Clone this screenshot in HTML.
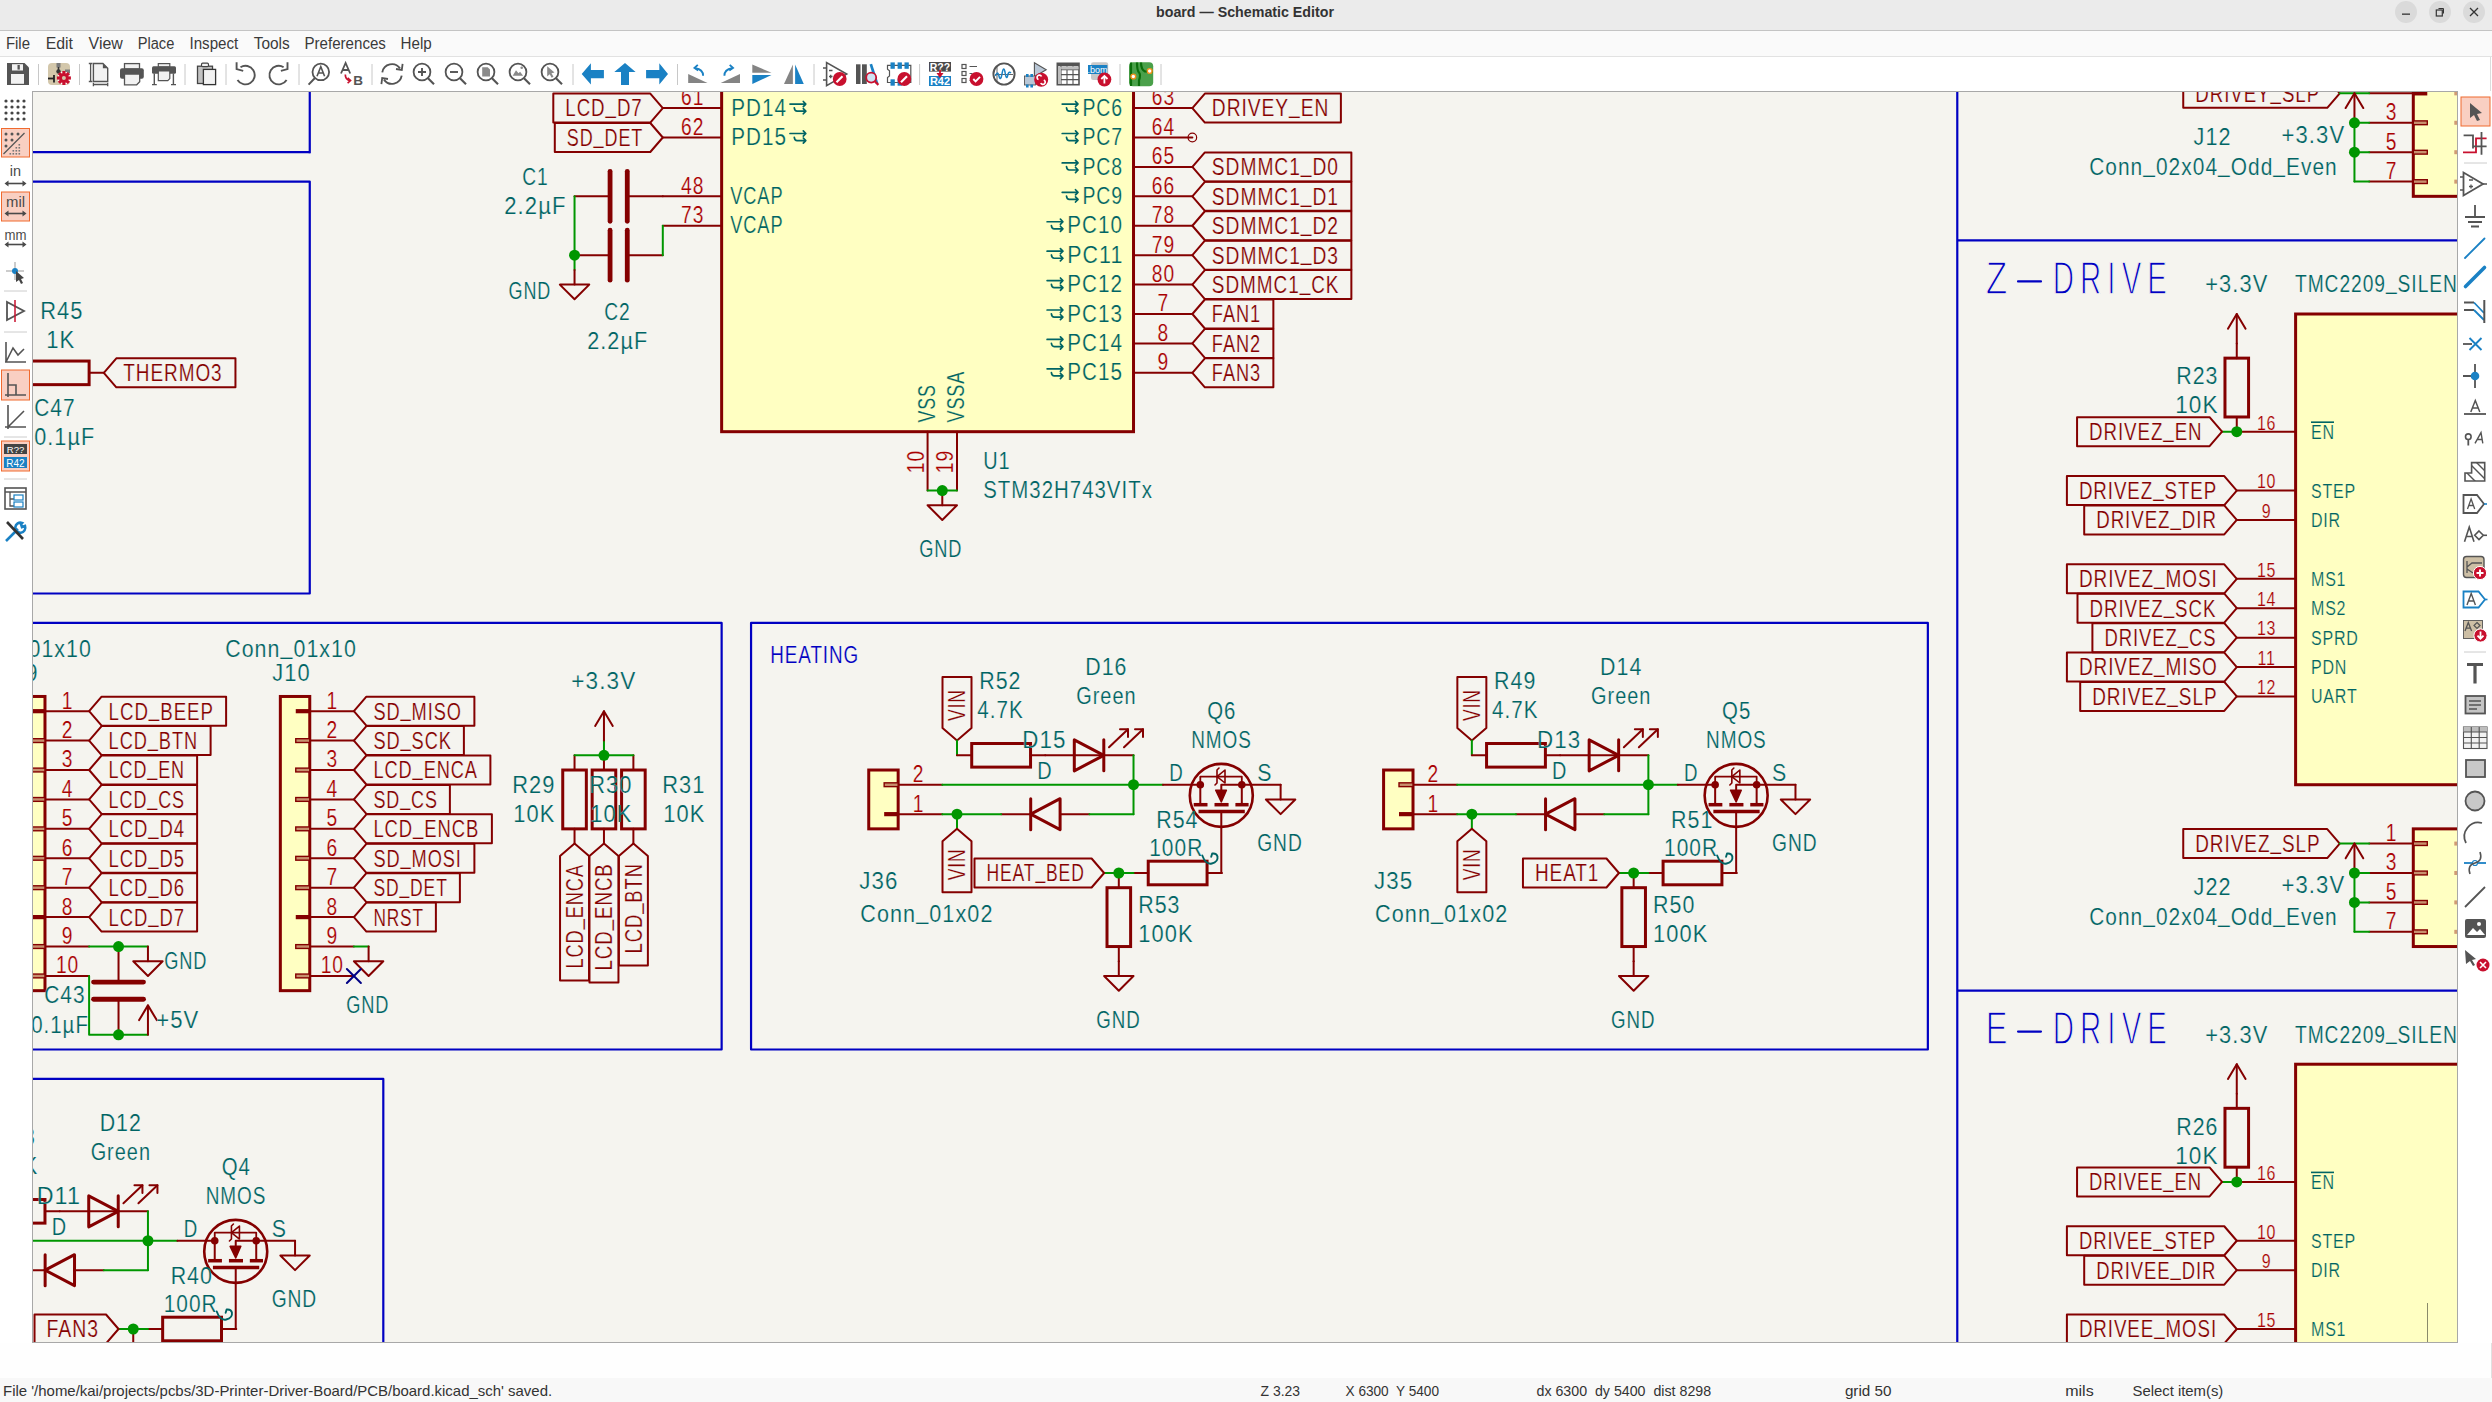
<!DOCTYPE html>
<html><head><meta charset="utf-8"><title>board — Schematic Editor</title>
<style>
html,body{margin:0;padding:0;width:2492px;height:1402px;overflow:hidden;background:#ffffff;}
svg{display:block;font-family:"Liberation Sans",sans-serif;}
</style></head><body>
<svg width="2492" height="1402" viewBox="0 0 2492 1402">
<defs><clipPath id="cv"><rect x="33" y="92" width="2424" height="1250"/></clipPath></defs>
<rect x="0" y="0" width="2492" height="30" fill="#ebebeb"/>
<rect x="0" y="30" width="2492" height="1" fill="#c4c4c4"/>
<text x="1156" y="16.8" font-size="15.5" font-weight="bold" fill="#333" textLength="178" lengthAdjust="spacingAndGlyphs">board — Schematic Editor</text>
<circle cx="2406" cy="12" r="11" fill="#dadada"/><rect x="2402" y="13.5" width="8" height="1.3" fill="#333"/>
<circle cx="2440" cy="12" r="11" fill="#dadada"/><rect x="2436.3" y="10" width="6" height="6" fill="none" stroke="#333" stroke-width="1.2"/><path d="M2438.5,8.5 h5 v5" fill="none" stroke="#333" stroke-width="1"/>
<circle cx="2474" cy="12" r="11" fill="#dadada"/><path d="M2470,8 l8,8 M2478,8 l-8,8" stroke="#333" stroke-width="1.3"/>
<rect x="0" y="31" width="2492" height="25" fill="#fafafa"/>
<rect x="0" y="56" width="2492" height="1" fill="#e2e2e2"/>
<g font-size="16" fill="#3a3a3a">
<text x="5.9" y="49.3" textLength="24.1" lengthAdjust="spacingAndGlyphs">File</text><text x="45.7" y="49.3" textLength="27.299999999999997" lengthAdjust="spacingAndGlyphs">Edit</text><text x="88.6" y="49.3" textLength="34.2" lengthAdjust="spacingAndGlyphs">View</text><text x="137.7" y="49.3" textLength="36.60000000000002" lengthAdjust="spacingAndGlyphs">Place</text><text x="189.5" y="49.3" textLength="48.80000000000001" lengthAdjust="spacingAndGlyphs">Inspect</text><text x="253.7" y="49.3" textLength="36.0" lengthAdjust="spacingAndGlyphs">Tools</text><text x="304.5" y="49.3" textLength="81.39999999999998" lengthAdjust="spacingAndGlyphs">Preferences</text><text x="400.6" y="49.3" textLength="31.19999999999999" lengthAdjust="spacingAndGlyphs">Help</text>
</g>
<path d="M7,63 h17.5 l4.5,4.5 v17.5 h-22 z" fill="#545454"/><rect x="12" y="64.2" width="11" height="6.3" fill="#f2f2f2"/><rect x="17.5" y="65" width="2.3" height="4.6" fill="#545454"/><rect x="11" y="74" width="13" height="9.8" fill="#f2f2f2"/><line x1="38.5" y1="64" x2="38.5" y2="85" stroke="#c8c8c8" stroke-width="1"/><rect x="48" y="63" width="22" height="22" rx="4" fill="#d3c7ab"/><rect x="56.5" y="63" width="4" height="4.5" fill="#7a7a7a"/><path d="M58.5,67 v6" stroke="#333" stroke-width="1.6"/><circle cx="58.5" cy="71.5" r="2.2" fill="#333"/><rect x="65" y="69.5" width="5" height="3.5" fill="#7a7a7a"/><path d="M48,78.5 h6" stroke="#222" stroke-width="1.8"/><path d="M54,75 v7.5" stroke="#222" stroke-width="1.8"/><circle cx="63.9" cy="78" r="6.6" fill="#fff"/><rect x="-1.6" y="-7" width="3.2" height="3" transform="translate(63.9,78) rotate(0)" fill="#c8102e"/><rect x="-1.6" y="-7" width="3.2" height="3" transform="translate(63.9,78) rotate(45)" fill="#c8102e"/><rect x="-1.6" y="-7" width="3.2" height="3" transform="translate(63.9,78) rotate(90)" fill="#c8102e"/><rect x="-1.6" y="-7" width="3.2" height="3" transform="translate(63.9,78) rotate(135)" fill="#c8102e"/><rect x="-1.6" y="-7" width="3.2" height="3" transform="translate(63.9,78) rotate(180)" fill="#c8102e"/><rect x="-1.6" y="-7" width="3.2" height="3" transform="translate(63.9,78) rotate(225)" fill="#c8102e"/><rect x="-1.6" y="-7" width="3.2" height="3" transform="translate(63.9,78) rotate(270)" fill="#c8102e"/><rect x="-1.6" y="-7" width="3.2" height="3" transform="translate(63.9,78) rotate(315)" fill="#c8102e"/><circle cx="63.9" cy="78" r="4.8" fill="#c8102e"/><circle cx="63.9" cy="78" r="2" fill="#d3c7ab"/><line x1="79.5" y1="64" x2="79.5" y2="85" stroke="#c8c8c8" stroke-width="1"/><path d="M93.4,63.5 h9.5 l4.8,4.8 v13.2 h-14.3 z" fill="#f2f2f2" stroke="#545454" stroke-width="1.4"/><path d="M102.9,63.5 l4.8,4.8 h-4.8 z" fill="#545454"/><path d="M90.6,63.5 v18 M88.8,63.5 h3.6 M88.8,81.5 h3.6 M93.4,84.5 h14.3 M93.4,82.8 v3.4 M107.7,82.8 v3.4" stroke="#545454" stroke-width="1.3" fill="none"/><rect x="124.5" y="63.6" width="15" height="5.5" fill="#f2f2f2" stroke="#545454" stroke-width="1.3"/><rect x="120" y="68.2" width="23.8" height="10.5" rx="2" fill="#545454"/><path d="M124.5,74 h15.2 v7.8 l-3,3 h-12.2 z" fill="#f2f2f2" stroke="#545454" stroke-width="1.3"/><rect x="158.3" y="63.6" width="11.5" height="3.5" fill="#f2f2f2" stroke="#545454" stroke-width="1.2"/><rect x="152" y="66.2" width="24" height="7.6" rx="1.5" fill="#545454"/><path d="M158.3,71 h11.5 v7.6 l-2,2 h-9.5 z" fill="#f2f2f2" stroke="#545454" stroke-width="1.2"/><path d="M154.3,73.5 v11 M173.4,73.5 v11 M152,84.6 h4.8 M171,84.6 h5" stroke="#545454" stroke-width="1.4"/><line x1="185" y1="64" x2="185" y2="85" stroke="#c8c8c8" stroke-width="1"/><rect x="197.5" y="66.2" width="15" height="17.3" fill="#c2c2c2" stroke="#444" stroke-width="1.3"/><rect x="201.5" y="63.2" width="7" height="3.5" rx="1.2" fill="#f2f2f2" stroke="#444" stroke-width="1.2"/><rect x="203.4" y="69.4" width="12.2" height="15.2" fill="#f2f2f2" stroke="#333" stroke-width="1.3"/><line x1="226" y1="64" x2="226" y2="85" stroke="#c8c8c8" stroke-width="1"/><path d="M240.5,67.2 A9.3,9.3 0 1 1 237.5,80" fill="none" stroke="#545454" stroke-width="1.9"/><path d="M236.6,62.3 v6.8 l6.6,1.8" fill="none" stroke="#545454" stroke-width="1.9"/><path d="M283.6,67.2 A9.3,9.3 0 1 0 286.6,80" fill="none" stroke="#545454" stroke-width="1.9"/><path d="M287.5,62.3 v6.8 l-6.6,1.8" fill="none" stroke="#545454" stroke-width="1.9"/><line x1="299" y1="64" x2="299" y2="85" stroke="#c8c8c8" stroke-width="1"/><circle cx="320.8" cy="71.9" r="8.3" fill="none" stroke="#545454" stroke-width="1.8"/><path d="M315.2,77.8 l-6.6,6.8" stroke="#545454" stroke-width="2"/><path d="M317,76.2 l3.8,-9.5 l3.8,9.5 M318.4,73 h4.8" stroke="#545454" stroke-width="1.6" fill="none"/><path d="M341,73.5 l4.6,-10.5 l4.6,10.5 M342.6,70 h6" stroke="#545454" stroke-width="1.8" fill="none"/><text x="358" y="84.6" font-size="13.5" font-weight="bold" text-anchor="middle" fill="#545454">B</text><path d="M345.3,74.5 q0,5 4.5,6.2" stroke="#c8102e" stroke-width="1.7" fill="none"/><path d="M347.6,77.8 l3,2.8 l-3,2.6" stroke="#c8102e" stroke-width="1.6" fill="none"/><line x1="372" y1="64" x2="372" y2="85" stroke="#c8c8c8" stroke-width="1"/><path d="M382.3,72.3 A9.8,9.8 0 0 1 400.0,68.4 M401.7,75.7 A9.8,9.8 0 0 1 384.0,79.6" fill="none" stroke="#545454" stroke-width="1.9"/><path d="M402.6,63.8 l-0.8,6.2 l-5.8,-1 M381.4,84.2 l0.8,-6.2 l5.8,1" fill="none" stroke="#545454" stroke-width="1.8"/><circle cx="422" cy="72" r="8.4" fill="none" stroke="#545454" stroke-width="1.8"/><path d="M428,78.2 l6,6" stroke="#545454" stroke-width="2.1"/><path d="M418,72 h8 M422,68 v8" stroke="#545454" stroke-width="1.9"/><circle cx="454" cy="72" r="8.4" fill="none" stroke="#545454" stroke-width="1.8"/><path d="M460,78.2 l6,6" stroke="#545454" stroke-width="2.1"/><path d="M450,72 h8" stroke="#545454" stroke-width="1.9"/><circle cx="486" cy="72" r="8.4" fill="none" stroke="#545454" stroke-width="1.8"/><path d="M492,78.2 l6,6" stroke="#545454" stroke-width="2.1"/><path d="M482.2,67.3 h5.5 l2.3,2.3 v7 h-7.8 z" fill="#8a8a8a"/><circle cx="518" cy="72" r="8.4" fill="none" stroke="#545454" stroke-width="1.8"/><path d="M524,78.2 l6,6" stroke="#545454" stroke-width="2.1"/><path d="M512.7,75.8 l3.3,-5.5 l2.5,3 l1.6,-1.6 l3,4.1 z" fill="#8a8a8a"/><circle cx="521.7" cy="67.8" r="1.3" fill="#8a8a8a"/><circle cx="550" cy="72" r="8.4" fill="none" stroke="#545454" stroke-width="1.8"/><path d="M556,78.2 l6,6" stroke="#545454" stroke-width="2.1"/><path d="M547.2,66.3 l7.3,6.3 l-3,0.6 l2,3.6 l-1.8,1 l-2,-3.6 l-2.5,2.2 z" fill="#8a8a8a"/><line x1="573" y1="64" x2="573" y2="85" stroke="#c8c8c8" stroke-width="1"/><path d="M581.7,73.9 l9.2,-10.6 v6.7 h13 v8.2 h-13 v6.3 z" fill="#1a81c4"/><path d="M625,63 l10.6,8.9 h-6.6 v13.1 h-8 v-13.1 h-6.7 z" fill="#1a81c4"/><path d="M668,73.9 l-8.7,-10.6 v6.7 h-13.2 v8.2 h13.2 v6.3 z" fill="#1a81c4"/><line x1="677.5" y1="64" x2="677.5" y2="85" stroke="#c8c8c8" stroke-width="1"/><path d="M688.2,73.9 v9 h19.3 z" fill="#848484"/><path d="M703.1,75.8 q0,-6.5 -7.6,-7.6" fill="none" stroke="#1a81c4" stroke-width="1.9"/><path d="M697.8,64.8 l-3.4,3.2 l3.8,2.6" fill="none" stroke="#1a81c4" stroke-width="1.8"/><path d="M740,73.9 v9 h-19.3 z" fill="#848484"/><path d="M724.4,75.8 q0,-6.5 7.6,-7.6" fill="none" stroke="#1a81c4" stroke-width="1.9"/><path d="M729.7,64.8 l3.4,3.2 l-3.8,2.6" fill="none" stroke="#1a81c4" stroke-width="1.8"/><path d="M752.3,64.5 l19.2,8.3 h-19.2 z" fill="#848484"/><path d="M752.3,75 h19.2 l-19.2,9 z" fill="#1a81c4"/><path d="M784,84 l8.9,-19.5 v19.5 z" fill="#848484"/><path d="M795.1,64.5 l8.7,19.5 h-8.7 z" fill="#1a81c4"/><line x1="814" y1="64" x2="814" y2="85" stroke="#c8c8c8" stroke-width="1"/><path d="M826.6,62.6 v23 l20.1,-11.5 z" fill="none" stroke="#545454" stroke-width="1.6"/><path d="M823,68 h3.6 M823,80 h3.6 M829,70.5 h3.5 M829,76.5 h3.5 M830.7,74.7 v3.6" stroke="#545454" stroke-width="1.3"/><circle cx="839.7" cy="79" r="6.9" fill="#c8102e"/><path d="M836.5,82.3 l6,-6" stroke="#fff" stroke-width="2.2"/><rect x="856" y="64.3" width="4.5" height="19.7" fill="#545454"/><rect x="862" y="64.3" width="4.8" height="19.7" fill="#545454"/><path d="M869.5,64.5 l2.6,-0.8 l6.2,19.2 l-2.6,0.8 z" fill="#1a81c4"/><circle cx="871.2" cy="77.6" r="5" fill="#cfe3f3" stroke="#c8102e" stroke-width="1.8"/><path d="M874.8,81.3 l3.6,3.6" stroke="#c8102e" stroke-width="2.2"/><path d="M887.5,65.3 h23.3 v17.2 h-23.3 v-5 l2,-1.6 v-5 l-2,-1.6 z" fill="none" stroke="#545454" stroke-width="1.2"/><rect x="890.5" y="62.4" width="4.3" height="6.4" fill="#1a81c4"/><rect x="897.6" y="62.4" width="4.3" height="6.4" fill="#1a81c4"/><rect x="904.5" y="62.4" width="4.3" height="6.4" fill="#1a81c4"/><rect x="890.5" y="79.3" width="4.3" height="6.4" fill="#1a81c4"/><rect x="897.6" y="79.3" width="4.3" height="6.4" fill="#1a81c4"/><circle cx="904.3" cy="79" r="6.9" fill="#c8102e"/><path d="M901,82.3 l6,-6" stroke="#fff" stroke-width="2.2"/><line x1="919.6" y1="64" x2="919.6" y2="85" stroke="#c8c8c8" stroke-width="1"/><rect x="929" y="62" width="22" height="9.6" fill="#4a4a4a"/><text x="940" y="70.6" font-size="10.5" font-weight="bold" text-anchor="middle" fill="#fff">R??</text><rect x="929" y="76" width="22" height="10" fill="#1a81c4"/><text x="940" y="85.3" font-size="11" font-weight="bold" text-anchor="middle" fill="#fff">R42</text><path d="M936.5,73 h7 l-3.5,5 z" fill="#c8102e"/><path d="M940,70 v4" stroke="#c8102e" stroke-width="1.8"/><rect x="962" y="64.5" width="4" height="4" fill="none" stroke="#545454" stroke-width="1.2"/><rect x="962" y="71.5" width="4" height="4" fill="none" stroke="#545454" stroke-width="1.2"/><rect x="962" y="78.5" width="4" height="4" fill="none" stroke="#545454" stroke-width="1.2"/><path d="M969.5,66.5 h7.5 M969.5,73.5 h3 M969.5,80.5 h1.5" stroke="#545454" stroke-width="1.2"/><circle cx="976.5" cy="79" r="6.9" fill="#c8102e"/><path d="M973.3,79 l2.3,2.4 l4.4,-4.6" stroke="#fff" stroke-width="1.9" fill="none"/><circle cx="1004" cy="74" r="10.6" fill="none" stroke="#545454" stroke-width="1.9"/><path d="M997,66 v16 M995,74.5 h18" stroke="#545454" stroke-width="0.9"/><path d="M995.5,76 q2,-6 3.5,0 q1.5,6 3,-2 q1.5,-9 3,-2 q1.5,10 3,2 q1.2,-3 3,-1" fill="none" stroke="#1a81c4" stroke-width="1.5"/><path d="M1034.4,62.8 v14 l11.8,-7 z" fill="#b9c7d6" stroke="#545454" stroke-width="1.1"/><rect x="1024.5" y="76" width="11" height="9" fill="#b9c7d6" stroke="#545454" stroke-width="0.9"/><rect x="1026" y="74" width="2.6" height="3" fill="#1a81c4"/><rect x="1030.4" y="74" width="2.6" height="3" fill="#1a81c4"/><rect x="1026" y="84.5" width="2.6" height="3" fill="#1a81c4"/><rect x="1030.4" y="84.5" width="2.6" height="3" fill="#1a81c4"/><circle cx="1041.2" cy="79.7" r="7" fill="#c8102e"/><path d="M1038.5,79.5 a2.3,2.3 0 1 1 3,-3 M1043.8,80 a2.3,2.3 0 1 1 -3,3" stroke="#fff" stroke-width="1.7" fill="none"/><rect x="1057.3" y="63.3" width="21.7" height="21.4" fill="#fff" stroke="#545454" stroke-width="1.6"/><rect x="1057.3" y="63.3" width="21.7" height="3" fill="#545454"/><path d="M1057.3,69.6 h21.7 M1057.3,74.6 h21.7 M1057.3,79.6 h21.7 M1061,63.3 v21.4 M1067,63.3 v21.4 M1073,63.3 v21.4" stroke="#545454" stroke-width="1.1"/><rect x="1058" y="67" width="3" height="17" fill="#bdbdbd"/><rect x="1061.5" y="66.5" width="17" height="3" fill="#bdbdbd"/><rect x="1091" y="62.3" width="17.2" height="17.6" rx="2.2" fill="#c8c8c8"/><rect x="1088" y="65" width="19.4" height="9" fill="#1a81c4"/><text x="1097.6" y="72.6" font-size="9" text-anchor="middle" fill="#fff">.bom</text><circle cx="1104.4" cy="79.5" r="6.9" fill="#c8102e"/><path d="M1104.4,83.6 v-7.5 M1101.3,79 l3.1,-3.1 l3.1,3.1" stroke="#fff" stroke-width="1.8" fill="none"/><line x1="1120" y1="64" x2="1120" y2="85" stroke="#c8c8c8" stroke-width="1"/><rect x="1129" y="62.2" width="24.2" height="24" rx="4" fill="#4aa04a"/><path d="M1131,62.5 v23.5 M1137,62.5 q0,8 2,10 q2,2 0,8 v5.5 M1141,62.5 q0,7 4,9 h8" stroke="#0b6e0b" stroke-width="2.2" fill="none"/><circle cx="1133.3" cy="76.5" r="2.4" fill="#fff" stroke="#f0901a" stroke-width="1.4"/><circle cx="1149.7" cy="71" r="2.4" fill="#fff" stroke="#f0901a" stroke-width="1.4"/><line x1="1161" y1="64" x2="1161" y2="85" stroke="#c8c8c8" stroke-width="1"/>
<rect x="2490" y="57" width="1" height="34" fill="#dcdcdc"/>
<rect x="32" y="91" width="2426" height="1252" fill="#a8a8a8"/>
<rect x="33" y="92" width="2424" height="1250" fill="#f5f4ef"/>
<g clip-path="url(#cv)">
<line x1="20" y1="152.2" x2="309.76" y2="152.2" stroke="#0000c2" stroke-width="2.2" stroke-linecap="butt"/>
<line x1="309.76" y1="80" x2="309.76" y2="152.2" stroke="#0000c2" stroke-width="2.2" stroke-linecap="square"/>
<polyline points="20,181.62 309.76,181.62 309.76,593.5 20,593.5" stroke="#0000c2" stroke-width="2.2" fill="none" stroke-linejoin="round" stroke-linecap="round"/>
<rect x="30.27" y="361.05" width="58.84" height="23.6" stroke="#840000" stroke-width="3.0" fill="none"/>
<line x1="15.56" y1="372.85" x2="30.27" y2="372.85" stroke="#840000" stroke-width="2.0" stroke-linecap="round"/>
<line x1="89.11" y1="372.85" x2="103.82" y2="372.85" stroke="#840000" stroke-width="2.0" stroke-linecap="round"/>
<polygon points="103.82,372.85 116.32,358.35 235.45,358.35 235.45,387.35 116.32,387.35" stroke="#840000" stroke-width="2.0" fill="none" stroke-linejoin="round" stroke-linecap="round"/>
<text transform="matrix(0.79,0,0,1,123.32,381.26)" fill="#840000" font-size="24" text-anchor="start" letter-spacing="1.2" stroke="#f5f4ef" stroke-width="0.2">THERMO3</text>
<text transform="matrix(0.91,0,0,1,40.2,319.41)" fill="#006464" font-size="24" text-anchor="start" letter-spacing="1.2" stroke="#f5f4ef" stroke-width="0.2">R45</text>
<text transform="matrix(0.92,0,0,1,46.2,348.41)" fill="#006464" font-size="24" text-anchor="start" letter-spacing="1.2" stroke="#f5f4ef" stroke-width="0.2">1K</text>
<text transform="matrix(0.87,0,0,1,34.2,416.41)" fill="#006464" font-size="24" text-anchor="start" letter-spacing="1.2" stroke="#f5f4ef" stroke-width="0.2">C47</text>
<text transform="matrix(0.9,0,0,1,34.2,445.41)" fill="#006464" font-size="24" text-anchor="start" letter-spacing="1.2" stroke="#f5f4ef" stroke-width="0.2">0.1µF</text>
<rect x="721.64" y="60" width="411.88" height="371.69" stroke="#840000" stroke-width="3.0" fill="#ffffc2"/>
<line x1="662.8" y1="108.07" x2="721.64" y2="108.07" stroke="#840000" stroke-width="2.0" stroke-linecap="round"/>
<text transform="matrix(0.8,0,0,1,692.7,105.48)" fill="#a90000" font-size="24" text-anchor="middle" letter-spacing="1.2" stroke="#f5f4ef" stroke-width="0.2">61</text>
<text transform="matrix(0.86,0,0,1,731.3,115.68)" fill="#006464" font-size="24" text-anchor="start" letter-spacing="1.2" stroke="#ffffc2" stroke-width="0.2">PD14</text>
<path d="M790,104.07 h15.8 M803.3,101.47 l2.5,2.6 l-2.5,2.6 M794.3,107.87 q0.4,3.3 2.8,3.3 h8.7 M803.3,108.57 l2.5,2.6 l-2.5,2.6" stroke="#006464" stroke-width="1.7" fill="none" stroke-linecap="round" stroke-linejoin="round"/>
<line x1="662.8" y1="137.49" x2="721.64" y2="137.49" stroke="#840000" stroke-width="2.0" stroke-linecap="round"/>
<text transform="matrix(0.8,0,0,1,692.7,134.9)" fill="#a90000" font-size="24" text-anchor="middle" letter-spacing="1.2" stroke="#f5f4ef" stroke-width="0.2">62</text>
<text transform="matrix(0.86,0,0,1,731.3,145.1)" fill="#006464" font-size="24" text-anchor="start" letter-spacing="1.2" stroke="#ffffc2" stroke-width="0.2">PD15</text>
<path d="M790,133.49 h15.8 M803.3,130.89 l2.5,2.6 l-2.5,2.6 M794.3,137.29 q0.4,3.3 2.8,3.3 h8.7 M803.3,137.99 l2.5,2.6 l-2.5,2.6" stroke="#006464" stroke-width="1.7" fill="none" stroke-linecap="round" stroke-linejoin="round"/>
<line x1="662.8" y1="196.33" x2="721.64" y2="196.33" stroke="#840000" stroke-width="2.0" stroke-linecap="round"/>
<text transform="matrix(0.8,0,0,1,692.7,193.74)" fill="#a90000" font-size="24" text-anchor="middle" letter-spacing="1.2" stroke="#f5f4ef" stroke-width="0.2">48</text>
<text transform="matrix(0.76,0,0,1,730.2,203.94)" fill="#006464" font-size="24" text-anchor="start" letter-spacing="1.2" stroke="#ffffc2" stroke-width="0.2">VCAP</text>
<line x1="662.8" y1="225.75" x2="721.64" y2="225.75" stroke="#840000" stroke-width="2.0" stroke-linecap="round"/>
<text transform="matrix(0.8,0,0,1,692.7,223.16)" fill="#a90000" font-size="24" text-anchor="middle" letter-spacing="1.2" stroke="#f5f4ef" stroke-width="0.2">73</text>
<text transform="matrix(0.76,0,0,1,730.2,233.36)" fill="#006464" font-size="24" text-anchor="start" letter-spacing="1.2" stroke="#ffffc2" stroke-width="0.2">VCAP</text>
<line x1="1133.52" y1="108.07" x2="1192.36" y2="108.07" stroke="#840000" stroke-width="2.0" stroke-linecap="round"/>
<text transform="matrix(0.8,0,0,1,1163.42,105.48)" fill="#a90000" font-size="24" text-anchor="middle" letter-spacing="1.2" stroke="#f5f4ef" stroke-width="0.2">63</text>
<text transform="matrix(0.81,0,0,1,1082.4,115.68)" fill="#006464" font-size="24" text-anchor="start" letter-spacing="1.2" stroke="#ffffc2" stroke-width="0.2">PC6</text>
<path d="M1062.2,104.07 h15.8 M1075.5,101.47 l2.5,2.6 l-2.5,2.6 M1066.5,107.87 q0.4,3.3 2.8,3.3 h8.7 M1075.5,108.57 l2.5,2.6 l-2.5,2.6" stroke="#006464" stroke-width="1.7" fill="none" stroke-linecap="round" stroke-linejoin="round"/>
<line x1="1133.52" y1="137.49" x2="1192.36" y2="137.49" stroke="#840000" stroke-width="2.0" stroke-linecap="round"/>
<text transform="matrix(0.8,0,0,1,1163.42,134.9)" fill="#a90000" font-size="24" text-anchor="middle" letter-spacing="1.2" stroke="#f5f4ef" stroke-width="0.2">64</text>
<text transform="matrix(0.81,0,0,1,1082.4,145.1)" fill="#006464" font-size="24" text-anchor="start" letter-spacing="1.2" stroke="#ffffc2" stroke-width="0.2">PC7</text>
<path d="M1062.2,133.49 h15.8 M1075.5,130.89 l2.5,2.6 l-2.5,2.6 M1066.5,137.29 q0.4,3.3 2.8,3.3 h8.7 M1075.5,137.99 l2.5,2.6 l-2.5,2.6" stroke="#006464" stroke-width="1.7" fill="none" stroke-linecap="round" stroke-linejoin="round"/>
<line x1="1133.52" y1="166.91" x2="1192.36" y2="166.91" stroke="#840000" stroke-width="2.0" stroke-linecap="round"/>
<text transform="matrix(0.8,0,0,1,1163.42,164.32)" fill="#a90000" font-size="24" text-anchor="middle" letter-spacing="1.2" stroke="#f5f4ef" stroke-width="0.2">65</text>
<text transform="matrix(0.81,0,0,1,1082.4,174.52)" fill="#006464" font-size="24" text-anchor="start" letter-spacing="1.2" stroke="#ffffc2" stroke-width="0.2">PC8</text>
<path d="M1062.2,162.91 h15.8 M1075.5,160.31 l2.5,2.6 l-2.5,2.6 M1066.5,166.71 q0.4,3.3 2.8,3.3 h8.7 M1075.5,167.41 l2.5,2.6 l-2.5,2.6" stroke="#006464" stroke-width="1.7" fill="none" stroke-linecap="round" stroke-linejoin="round"/>
<line x1="1133.52" y1="196.33" x2="1192.36" y2="196.33" stroke="#840000" stroke-width="2.0" stroke-linecap="round"/>
<text transform="matrix(0.8,0,0,1,1163.42,193.74)" fill="#a90000" font-size="24" text-anchor="middle" letter-spacing="1.2" stroke="#f5f4ef" stroke-width="0.2">66</text>
<text transform="matrix(0.81,0,0,1,1082.4,203.94)" fill="#006464" font-size="24" text-anchor="start" letter-spacing="1.2" stroke="#ffffc2" stroke-width="0.2">PC9</text>
<path d="M1062.2,192.33 h15.8 M1075.5,189.73 l2.5,2.6 l-2.5,2.6 M1066.5,196.13 q0.4,3.3 2.8,3.3 h8.7 M1075.5,196.83 l2.5,2.6 l-2.5,2.6" stroke="#006464" stroke-width="1.7" fill="none" stroke-linecap="round" stroke-linejoin="round"/>
<line x1="1133.52" y1="225.75" x2="1192.36" y2="225.75" stroke="#840000" stroke-width="2.0" stroke-linecap="round"/>
<text transform="matrix(0.8,0,0,1,1163.42,223.16)" fill="#a90000" font-size="24" text-anchor="middle" letter-spacing="1.2" stroke="#f5f4ef" stroke-width="0.2">78</text>
<text transform="matrix(0.86,0,0,1,1067.3,233.36)" fill="#006464" font-size="24" text-anchor="start" letter-spacing="1.2" stroke="#ffffc2" stroke-width="0.2">PC10</text>
<path d="M1047.1,221.75 h15.8 M1060.4,219.15 l2.5,2.6 l-2.5,2.6 M1051.4,225.55 q0.4,3.3 2.8,3.3 h8.7 M1060.4,226.25 l2.5,2.6 l-2.5,2.6" stroke="#006464" stroke-width="1.7" fill="none" stroke-linecap="round" stroke-linejoin="round"/>
<line x1="1133.52" y1="255.17" x2="1192.36" y2="255.17" stroke="#840000" stroke-width="2.0" stroke-linecap="round"/>
<text transform="matrix(0.8,0,0,1,1163.42,252.58)" fill="#a90000" font-size="24" text-anchor="middle" letter-spacing="1.2" stroke="#f5f4ef" stroke-width="0.2">79</text>
<text transform="matrix(0.89,0,0,1,1067.3,262.78)" fill="#006464" font-size="24" text-anchor="start" letter-spacing="1.2" stroke="#ffffc2" stroke-width="0.2">PC11</text>
<path d="M1047.1,251.17 h15.8 M1060.4,248.57 l2.5,2.6 l-2.5,2.6 M1051.4,254.97 q0.4,3.3 2.8,3.3 h8.7 M1060.4,255.67 l2.5,2.6 l-2.5,2.6" stroke="#006464" stroke-width="1.7" fill="none" stroke-linecap="round" stroke-linejoin="round"/>
<line x1="1133.52" y1="284.59" x2="1192.36" y2="284.59" stroke="#840000" stroke-width="2.0" stroke-linecap="round"/>
<text transform="matrix(0.8,0,0,1,1163.42,282)" fill="#a90000" font-size="24" text-anchor="middle" letter-spacing="1.2" stroke="#f5f4ef" stroke-width="0.2">80</text>
<text transform="matrix(0.86,0,0,1,1067.3,292.2)" fill="#006464" font-size="24" text-anchor="start" letter-spacing="1.2" stroke="#ffffc2" stroke-width="0.2">PC12</text>
<path d="M1047.1,280.59 h15.8 M1060.4,277.99 l2.5,2.6 l-2.5,2.6 M1051.4,284.39 q0.4,3.3 2.8,3.3 h8.7 M1060.4,285.09 l2.5,2.6 l-2.5,2.6" stroke="#006464" stroke-width="1.7" fill="none" stroke-linecap="round" stroke-linejoin="round"/>
<line x1="1133.52" y1="314.01" x2="1192.36" y2="314.01" stroke="#840000" stroke-width="2.0" stroke-linecap="round"/>
<text transform="matrix(0.8,0,0,1,1163.42,311.42)" fill="#a90000" font-size="24" text-anchor="middle" letter-spacing="1.2" stroke="#f5f4ef" stroke-width="0.2">7</text>
<text transform="matrix(0.86,0,0,1,1067.3,321.62)" fill="#006464" font-size="24" text-anchor="start" letter-spacing="1.2" stroke="#ffffc2" stroke-width="0.2">PC13</text>
<path d="M1047.1,310.01 h15.8 M1060.4,307.41 l2.5,2.6 l-2.5,2.6 M1051.4,313.81 q0.4,3.3 2.8,3.3 h8.7 M1060.4,314.51 l2.5,2.6 l-2.5,2.6" stroke="#006464" stroke-width="1.7" fill="none" stroke-linecap="round" stroke-linejoin="round"/>
<line x1="1133.52" y1="343.43" x2="1192.36" y2="343.43" stroke="#840000" stroke-width="2.0" stroke-linecap="round"/>
<text transform="matrix(0.8,0,0,1,1163.42,340.84)" fill="#a90000" font-size="24" text-anchor="middle" letter-spacing="1.2" stroke="#f5f4ef" stroke-width="0.2">8</text>
<text transform="matrix(0.86,0,0,1,1067.3,351.04)" fill="#006464" font-size="24" text-anchor="start" letter-spacing="1.2" stroke="#ffffc2" stroke-width="0.2">PC14</text>
<path d="M1047.1,339.43 h15.8 M1060.4,336.83 l2.5,2.6 l-2.5,2.6 M1051.4,343.23 q0.4,3.3 2.8,3.3 h8.7 M1060.4,343.93 l2.5,2.6 l-2.5,2.6" stroke="#006464" stroke-width="1.7" fill="none" stroke-linecap="round" stroke-linejoin="round"/>
<line x1="1133.52" y1="372.85" x2="1192.36" y2="372.85" stroke="#840000" stroke-width="2.0" stroke-linecap="round"/>
<text transform="matrix(0.8,0,0,1,1163.42,370.26)" fill="#a90000" font-size="24" text-anchor="middle" letter-spacing="1.2" stroke="#f5f4ef" stroke-width="0.2">9</text>
<text transform="matrix(0.86,0,0,1,1067.3,380.46)" fill="#006464" font-size="24" text-anchor="start" letter-spacing="1.2" stroke="#ffffc2" stroke-width="0.2">PC15</text>
<path d="M1047.1,368.85 h15.8 M1060.4,366.25 l2.5,2.6 l-2.5,2.6 M1051.4,372.65 q0.4,3.3 2.8,3.3 h8.7 M1060.4,373.35 l2.5,2.6 l-2.5,2.6" stroke="#006464" stroke-width="1.7" fill="none" stroke-linecap="round" stroke-linejoin="round"/>
<circle cx="1192.36" cy="137.49" r="4.3" stroke="#840000" stroke-width="1.2" fill="none"/>
<polygon points="1192.36,108.07 1204.86,93.57 1340.88,93.57 1340.88,122.57 1204.86,122.57" stroke="#840000" stroke-width="2.0" fill="none" stroke-linejoin="round" stroke-linecap="round"/>
<text transform="matrix(0.8,0,0,1,1211.86,116.48)" fill="#840000" font-size="24" text-anchor="start" letter-spacing="1.2" stroke="#f5f4ef" stroke-width="0.2">DRIVEY<tspan dy="-3.2">_</tspan><tspan dy="3.2">E</tspan>N</text>
<polygon points="1192.36,166.91 1204.86,152.41 1351.36,152.41 1351.36,181.41 1204.86,181.41" stroke="#840000" stroke-width="2.0" fill="none" stroke-linejoin="round" stroke-linecap="round"/>
<text transform="matrix(0.8,0,0,1,1211.86,175.32)" fill="#840000" font-size="24" text-anchor="start" letter-spacing="1.2" stroke="#f5f4ef" stroke-width="0.2">SDMMC1<tspan dy="-3.2">_</tspan><tspan dy="3.2">D</tspan>0</text>
<polygon points="1192.36,196.33 1204.86,181.83 1351.36,181.83 1351.36,210.83 1204.86,210.83" stroke="#840000" stroke-width="2.0" fill="none" stroke-linejoin="round" stroke-linecap="round"/>
<text transform="matrix(0.8,0,0,1,1211.86,204.74)" fill="#840000" font-size="24" text-anchor="start" letter-spacing="1.2" stroke="#f5f4ef" stroke-width="0.2">SDMMC1<tspan dy="-3.2">_</tspan><tspan dy="3.2">D</tspan>1</text>
<polygon points="1192.36,225.75 1204.86,211.25 1351.36,211.25 1351.36,240.25 1204.86,240.25" stroke="#840000" stroke-width="2.0" fill="none" stroke-linejoin="round" stroke-linecap="round"/>
<text transform="matrix(0.8,0,0,1,1211.86,234.16)" fill="#840000" font-size="24" text-anchor="start" letter-spacing="1.2" stroke="#f5f4ef" stroke-width="0.2">SDMMC1<tspan dy="-3.2">_</tspan><tspan dy="3.2">D</tspan>2</text>
<polygon points="1192.36,255.17 1204.86,240.67 1351.36,240.67 1351.36,269.67 1204.86,269.67" stroke="#840000" stroke-width="2.0" fill="none" stroke-linejoin="round" stroke-linecap="round"/>
<text transform="matrix(0.8,0,0,1,1211.86,263.58)" fill="#840000" font-size="24" text-anchor="start" letter-spacing="1.2" stroke="#f5f4ef" stroke-width="0.2">SDMMC1<tspan dy="-3.2">_</tspan><tspan dy="3.2">D</tspan>3</text>
<polygon points="1192.36,284.59 1204.86,270.09 1351.36,270.09 1351.36,299.09 1204.86,299.09" stroke="#840000" stroke-width="2.0" fill="none" stroke-linejoin="round" stroke-linecap="round"/>
<text transform="matrix(0.79,0,0,1,1211.86,293)" fill="#840000" font-size="24" text-anchor="start" letter-spacing="1.2" stroke="#f5f4ef" stroke-width="0.2">SDMMC1<tspan dy="-3.2">_</tspan><tspan dy="3.2">C</tspan>K</text>
<polygon points="1192.36,314.01 1204.86,299.51 1273.36,299.51 1273.36,328.51 1204.86,328.51" stroke="#840000" stroke-width="2.0" fill="none" stroke-linejoin="round" stroke-linecap="round"/>
<text transform="matrix(0.76,0,0,1,1211.86,322.42)" fill="#840000" font-size="24" text-anchor="start" letter-spacing="1.2" stroke="#f5f4ef" stroke-width="0.2">FAN1</text>
<polygon points="1192.36,343.43 1204.86,328.93 1273.36,328.93 1273.36,357.93 1204.86,357.93" stroke="#840000" stroke-width="2.0" fill="none" stroke-linejoin="round" stroke-linecap="round"/>
<text transform="matrix(0.76,0,0,1,1211.86,351.84)" fill="#840000" font-size="24" text-anchor="start" letter-spacing="1.2" stroke="#f5f4ef" stroke-width="0.2">FAN2</text>
<polygon points="1192.36,372.85 1204.86,358.35 1273.36,358.35 1273.36,387.35 1204.86,387.35" stroke="#840000" stroke-width="2.0" fill="none" stroke-linejoin="round" stroke-linecap="round"/>
<text transform="matrix(0.76,0,0,1,1211.86,381.26)" fill="#840000" font-size="24" text-anchor="start" letter-spacing="1.2" stroke="#f5f4ef" stroke-width="0.2">FAN3</text>
<line x1="927.58" y1="431.69" x2="927.58" y2="490.53" stroke="#840000" stroke-width="2.0" stroke-linecap="round"/>
<line x1="957" y1="431.69" x2="957" y2="490.53" stroke="#840000" stroke-width="2.0" stroke-linecap="round"/>
<text transform="matrix(0,-0.74,1,0,934.99,422.5)" fill="#006464" font-size="24" text-anchor="start" letter-spacing="1.2" stroke="#ffffc2" stroke-width="0.2">VSS</text>
<text transform="matrix(0,-0.75,1,0,964.41,422.5)" fill="#006464" font-size="24" text-anchor="start" letter-spacing="1.2" stroke="#ffffc2" stroke-width="0.2">VSSA</text>
<text transform="matrix(0,-0.8,1,0,923.99,461.52)" fill="#a90000" font-size="24" text-anchor="middle" letter-spacing="1.2" stroke="#f5f4ef" stroke-width="0.2">10</text>
<text transform="matrix(0,-0.8,1,0,953.41,461.52)" fill="#a90000" font-size="24" text-anchor="middle" letter-spacing="1.2" stroke="#f5f4ef" stroke-width="0.2">19</text>
<polyline points="927.58,490.53 957,490.53" stroke="#009600" stroke-width="2.0" fill="none" stroke-linejoin="round" stroke-linecap="round"/>
<line x1="942.29" y1="490.53" x2="942.29" y2="505.24" stroke="#840000" stroke-width="2.0" stroke-linecap="round"/>
<polygon points="927.59,505.24 956.99,505.24 942.29,519.95" stroke="#840000" stroke-width="2.0" fill="none" stroke-linejoin="round" stroke-linecap="round"/>
<text transform="matrix(0.76,0,0,1,919.2,557.41)" fill="#006464" font-size="24" text-anchor="start" letter-spacing="1.2" stroke="#f5f4ef" stroke-width="0.2">GND</text>
<text transform="matrix(0.83,0,0,1,983.2,469.41)" fill="#006464" font-size="24" text-anchor="start" letter-spacing="1.2" stroke="#f5f4ef" stroke-width="0.2">U1</text>
<text transform="matrix(0.85,0,0,1,983.2,498.41)" fill="#006464" font-size="24" text-anchor="start" letter-spacing="1.2" stroke="#f5f4ef" stroke-width="0.2">STM32H743VITx</text>
<polygon points="662.8,108.07 650.3,93.57 553.3,93.57 553.3,122.57 650.3,122.57" stroke="#840000" stroke-width="2.0" fill="none" stroke-linejoin="round" stroke-linecap="round"/>
<text transform="matrix(0.78,0,0,1,565.3,116.48)" fill="#840000" font-size="24" text-anchor="start" letter-spacing="1.2" stroke="#f5f4ef" stroke-width="0.2">LCD<tspan dy="-3.2">_</tspan><tspan dy="3.2">D</tspan>7</text>
<polygon points="662.8,137.49 650.3,122.99 554.8,122.99 554.8,151.99 650.3,151.99" stroke="#840000" stroke-width="2.0" fill="none" stroke-linejoin="round" stroke-linecap="round"/>
<text transform="matrix(0.75,0,0,1,566.8,145.9)" fill="#840000" font-size="24" text-anchor="start" letter-spacing="1.2" stroke="#f5f4ef" stroke-width="0.2">SD<tspan dy="-3.2">_</tspan><tspan dy="3.2">D</tspan>ET</text>
<line x1="610.07" y1="171.33" x2="610.07" y2="221.33" stroke="#840000" stroke-width="4.8" stroke-linecap="round"/>
<line x1="627.27" y1="171.33" x2="627.27" y2="221.33" stroke="#840000" stroke-width="4.8" stroke-linecap="round"/>
<line x1="574.54" y1="196.33" x2="610.07" y2="196.33" stroke="#840000" stroke-width="2.0" stroke-linecap="round"/>
<line x1="627.27" y1="196.33" x2="662.8" y2="196.33" stroke="#840000" stroke-width="2.0" stroke-linecap="round"/>
<line x1="610.07" y1="230.17" x2="610.07" y2="280.17" stroke="#840000" stroke-width="4.8" stroke-linecap="round"/>
<line x1="627.27" y1="230.17" x2="627.27" y2="280.17" stroke="#840000" stroke-width="4.8" stroke-linecap="round"/>
<line x1="574.54" y1="255.17" x2="610.07" y2="255.17" stroke="#840000" stroke-width="2.0" stroke-linecap="round"/>
<line x1="627.27" y1="255.17" x2="662.8" y2="255.17" stroke="#840000" stroke-width="2.0" stroke-linecap="round"/>
<polyline points="574.54,196.33 574.54,269.88" stroke="#009600" stroke-width="2.0" fill="none" stroke-linejoin="round" stroke-linecap="round"/>
<polyline points="662.8,255.17 662.8,225.75" stroke="#009600" stroke-width="2.0" fill="none" stroke-linejoin="round" stroke-linecap="round"/>
<line x1="574.54" y1="269.88" x2="574.54" y2="284.59" stroke="#840000" stroke-width="2.0" stroke-linecap="round"/>
<polygon points="559.84,284.59 589.24,284.59 574.54,299.3" stroke="#840000" stroke-width="2.0" fill="none" stroke-linejoin="round" stroke-linecap="round"/>
<text transform="matrix(0.8,0,0,1,522.2,185.11)" fill="#006464" font-size="24" text-anchor="start" letter-spacing="1.2" stroke="#f5f4ef" stroke-width="0.2">C1</text>
<text transform="matrix(0.92,0,0,1,504.2,214.01)" fill="#006464" font-size="24" text-anchor="start" letter-spacing="1.2" stroke="#f5f4ef" stroke-width="0.2">2.2µF</text>
<text transform="matrix(0.8,0,0,1,604.2,319.91)" fill="#006464" font-size="24" text-anchor="start" letter-spacing="1.2" stroke="#f5f4ef" stroke-width="0.2">C2</text>
<text transform="matrix(0.9,0,0,1,587.2,348.81)" fill="#006464" font-size="24" text-anchor="start" letter-spacing="1.2" stroke="#f5f4ef" stroke-width="0.2">2.2µF</text>
<text transform="matrix(0.75,0,0,1,508.5,298.71)" fill="#006464" font-size="24" text-anchor="start" letter-spacing="1.2" stroke="#f5f4ef" stroke-width="0.2">GND</text>
<line x1="1957.28" y1="-509.75" x2="2470" y2="-509.75" stroke="#0000c2" stroke-width="2.2" stroke-linecap="butt"/>
<text transform="matrix(0.71,0,0,1,1985.8,-456.1)" fill="#0000c2" font-size="46" text-anchor="start" stroke="#f5f4ef" stroke-width="1.4">Y</text>
<line x1="2018" y1="-468.81" x2="2041" y2="-468.81" stroke="#0000c2" stroke-width="2.1" stroke-linecap="round"/>
<text transform="matrix(0.64,0,0,1,2052.7,-456.1)" fill="#0000c2" font-size="46" text-anchor="start" letter-spacing="9.5" stroke="#f5f4ef" stroke-width="1.4">DRIVE</text>
<text transform="matrix(0.91,0,0,1,2205.2,-457.8)" fill="#006464" font-size="24" text-anchor="start" letter-spacing="1.2" stroke="#f5f4ef" stroke-width="0.2">+3.3V</text>
<text transform="matrix(0.8,0,0,1,2295,-457.8)" fill="#006464" font-size="24" text-anchor="start" letter-spacing="1.2" stroke="#f5f4ef" stroke-width="0.2">TMC2209<tspan dy="-3.2">_</tspan><tspan dy="3.2">S</tspan>ILENTSTEPSTICK</text>
<rect x="2295.61" y="-436.2" width="304.39" height="470.72" stroke="#840000" stroke-width="3.0" fill="#ffffc2"/>
<line x1="2236.77" y1="-318.52" x2="2295.61" y2="-318.52" stroke="#840000" stroke-width="2.0" stroke-linecap="round"/>
<text transform="matrix(0.8,0,0,1,2266.59,-320.71)" fill="#a90000" font-size="20" text-anchor="middle" letter-spacing="1" stroke="#f5f4ef" stroke-width="0.2">16</text>
<text transform="matrix(0.8,0,0,1,2311,-311.51)" fill="#006464" font-size="20" text-anchor="start" letter-spacing="1" stroke="#ffffc2" stroke-width="0.2">EN</text>
<line x1="2236.77" y1="-259.68" x2="2295.61" y2="-259.68" stroke="#840000" stroke-width="2.0" stroke-linecap="round"/>
<text transform="matrix(0.8,0,0,1,2266.59,-261.88)" fill="#a90000" font-size="20" text-anchor="middle" letter-spacing="1" stroke="#f5f4ef" stroke-width="0.2">10</text>
<text transform="matrix(0.8,0,0,1,2311,-252.68)" fill="#006464" font-size="20" text-anchor="start" letter-spacing="1" stroke="#ffffc2" stroke-width="0.2">STEP</text>
<line x1="2236.77" y1="-230.26" x2="2295.61" y2="-230.26" stroke="#840000" stroke-width="2.0" stroke-linecap="round"/>
<text transform="matrix(0.8,0,0,1,2266.59,-232.46)" fill="#a90000" font-size="20" text-anchor="middle" letter-spacing="1" stroke="#f5f4ef" stroke-width="0.2">9</text>
<text transform="matrix(0.8,0,0,1,2311,-223.26)" fill="#006464" font-size="20" text-anchor="start" letter-spacing="1" stroke="#ffffc2" stroke-width="0.2">DIR</text>
<line x1="2236.77" y1="-171.42" x2="2295.61" y2="-171.42" stroke="#840000" stroke-width="2.0" stroke-linecap="round"/>
<text transform="matrix(0.8,0,0,1,2266.59,-173.62)" fill="#a90000" font-size="20" text-anchor="middle" letter-spacing="1" stroke="#f5f4ef" stroke-width="0.2">15</text>
<text transform="matrix(0.8,0,0,1,2311,-164.42)" fill="#006464" font-size="20" text-anchor="start" letter-spacing="1" stroke="#ffffc2" stroke-width="0.2">MS1</text>
<line x1="2236.77" y1="-142" x2="2295.61" y2="-142" stroke="#840000" stroke-width="2.0" stroke-linecap="round"/>
<text transform="matrix(0.8,0,0,1,2266.59,-144.2)" fill="#a90000" font-size="20" text-anchor="middle" letter-spacing="1" stroke="#f5f4ef" stroke-width="0.2">14</text>
<text transform="matrix(0.8,0,0,1,2311,-135)" fill="#006464" font-size="20" text-anchor="start" letter-spacing="1" stroke="#ffffc2" stroke-width="0.2">MS2</text>
<line x1="2236.77" y1="-112.58" x2="2295.61" y2="-112.58" stroke="#840000" stroke-width="2.0" stroke-linecap="round"/>
<text transform="matrix(0.8,0,0,1,2266.59,-114.78)" fill="#a90000" font-size="20" text-anchor="middle" letter-spacing="1" stroke="#f5f4ef" stroke-width="0.2">13</text>
<text transform="matrix(0.8,0,0,1,2311,-105.58)" fill="#006464" font-size="20" text-anchor="start" letter-spacing="1" stroke="#ffffc2" stroke-width="0.2">SPRD</text>
<line x1="2236.77" y1="-83.16" x2="2295.61" y2="-83.16" stroke="#840000" stroke-width="2.0" stroke-linecap="round"/>
<text transform="matrix(0.8,0,0,1,2266.59,-85.36)" fill="#a90000" font-size="20" text-anchor="middle" letter-spacing="1" stroke="#f5f4ef" stroke-width="0.2">11</text>
<text transform="matrix(0.8,0,0,1,2311,-76.16)" fill="#006464" font-size="20" text-anchor="start" letter-spacing="1" stroke="#ffffc2" stroke-width="0.2">PDN</text>
<line x1="2236.77" y1="-53.74" x2="2295.61" y2="-53.74" stroke="#840000" stroke-width="2.0" stroke-linecap="round"/>
<text transform="matrix(0.8,0,0,1,2266.59,-55.94)" fill="#a90000" font-size="20" text-anchor="middle" letter-spacing="1" stroke="#f5f4ef" stroke-width="0.2">12</text>
<text transform="matrix(0.8,0,0,1,2311,-46.73)" fill="#006464" font-size="20" text-anchor="start" letter-spacing="1" stroke="#ffffc2" stroke-width="0.2">UART</text>
<line x1="2311" y1="-328.02" x2="2334.03" y2="-328.02" stroke="#006464" stroke-width="1.6" stroke-linecap="butt"/>
<rect x="2224.97" y="-392.07" width="23.6" height="58.84" stroke="#840000" stroke-width="3.0" fill="none"/>
<line x1="2236.77" y1="-406.78" x2="2236.77" y2="-392.07" stroke="#840000" stroke-width="2.0" stroke-linecap="round"/>
<line x1="2236.77" y1="-333.23" x2="2236.77" y2="-318.52" stroke="#840000" stroke-width="2.0" stroke-linecap="round"/>
<line x1="2236.77" y1="-406.78" x2="2236.77" y2="-436.2" stroke="#840000" stroke-width="2.0" stroke-linecap="round"/>
<polyline points="2227.97,-421.49 2236.77,-436.2 2245.57,-421.49" stroke="#840000" stroke-width="2.0" fill="none" stroke-linejoin="round" stroke-linecap="round"/>
<polyline points="2222.06,-318.52 2236.77,-318.52" stroke="#009600" stroke-width="2.0" fill="none" stroke-linejoin="round" stroke-linecap="round"/>
<polygon points="2222.06,-318.52 2209.56,-333.02 2077.06,-333.02 2077.06,-304.02 2209.56,-304.02" stroke="#840000" stroke-width="2.0" fill="none" stroke-linejoin="round" stroke-linecap="round"/>
<text transform="matrix(0.77,0,0,1,2089.06,-310.11)" fill="#840000" font-size="24" text-anchor="start" letter-spacing="1.2" stroke="#f5f4ef" stroke-width="0.2">DRIVEY<tspan dy="-3.2">_</tspan><tspan dy="3.2">E</tspan>N</text>
<text transform="matrix(0.89,0,0,1,2176.2,-365.8)" fill="#006464" font-size="24" text-anchor="start" letter-spacing="1.2" stroke="#f5f4ef" stroke-width="0.2">R20</text>
<text transform="matrix(0.94,0,0,1,2175.2,-336.8)" fill="#006464" font-size="24" text-anchor="start" letter-spacing="1.2" stroke="#f5f4ef" stroke-width="0.2">10K</text>
<polygon points="2236.77,-259.68 2224.27,-274.18 2066.9,-274.18 2066.9,-245.18 2224.27,-245.18" stroke="#840000" stroke-width="2.0" fill="none" stroke-linejoin="round" stroke-linecap="round"/>
<text transform="matrix(0.77,0,0,1,2078.9,-251.27)" fill="#840000" font-size="24" text-anchor="start" letter-spacing="1.2" stroke="#f5f4ef" stroke-width="0.2">DRIVEY<tspan dy="-3.2">_</tspan><tspan dy="3.2">S</tspan>TEP</text>
<polygon points="2236.77,-230.26 2224.27,-244.76 2084.2,-244.76 2084.2,-215.76 2224.27,-215.76" stroke="#840000" stroke-width="2.0" fill="none" stroke-linejoin="round" stroke-linecap="round"/>
<text transform="matrix(0.77,0,0,1,2096.2,-221.85)" fill="#840000" font-size="24" text-anchor="start" letter-spacing="1.2" stroke="#f5f4ef" stroke-width="0.2">DRIVEY<tspan dy="-3.2">_</tspan><tspan dy="3.2">D</tspan>IR</text>
<polygon points="2236.77,-171.42 2224.27,-185.92 2066.9,-185.92 2066.9,-156.92 2224.27,-156.92" stroke="#840000" stroke-width="2.0" fill="none" stroke-linejoin="round" stroke-linecap="round"/>
<text transform="matrix(0.78,0,0,1,2078.9,-163.01)" fill="#840000" font-size="24" text-anchor="start" letter-spacing="1.2" stroke="#f5f4ef" stroke-width="0.2">DRIVEY<tspan dy="-3.2">_</tspan><tspan dy="3.2">M</tspan>OSI</text>
<polygon points="2236.77,-142 2224.27,-156.5 2077.5,-156.5 2077.5,-127.5 2224.27,-127.5" stroke="#840000" stroke-width="2.0" fill="none" stroke-linejoin="round" stroke-linecap="round"/>
<text transform="matrix(0.78,0,0,1,2089.5,-133.59)" fill="#840000" font-size="24" text-anchor="start" letter-spacing="1.2" stroke="#f5f4ef" stroke-width="0.2">DRIVEY<tspan dy="-3.2">_</tspan><tspan dy="3.2">S</tspan>CK</text>
<polygon points="2236.77,-112.58 2224.27,-127.08 2092.4,-127.08 2092.4,-98.08 2224.27,-98.08" stroke="#840000" stroke-width="2.0" fill="none" stroke-linejoin="round" stroke-linecap="round"/>
<text transform="matrix(0.77,0,0,1,2104.4,-104.17)" fill="#840000" font-size="24" text-anchor="start" letter-spacing="1.2" stroke="#f5f4ef" stroke-width="0.2">DRIVEY<tspan dy="-3.2">_</tspan><tspan dy="3.2">C</tspan>S</text>
<polygon points="2236.77,-83.16 2224.27,-97.66 2066.9,-97.66 2066.9,-68.66 2224.27,-68.66" stroke="#840000" stroke-width="2.0" fill="none" stroke-linejoin="round" stroke-linecap="round"/>
<text transform="matrix(0.78,0,0,1,2078.9,-74.75)" fill="#840000" font-size="24" text-anchor="start" letter-spacing="1.2" stroke="#f5f4ef" stroke-width="0.2">DRIVEY<tspan dy="-3.2">_</tspan><tspan dy="3.2">M</tspan>ISO</text>
<polygon points="2236.77,-53.74 2224.27,-68.24 2080.2,-68.24 2080.2,-39.24 2224.27,-39.24" stroke="#840000" stroke-width="2.0" fill="none" stroke-linejoin="round" stroke-linecap="round"/>
<text transform="matrix(0.78,0,0,1,2092.2,-45.33)" fill="#840000" font-size="24" text-anchor="start" letter-spacing="1.2" stroke="#f5f4ef" stroke-width="0.2">DRIVEY<tspan dy="-3.2">_</tspan><tspan dy="3.2">S</tspan>LP</text>
<rect x="2413.29" y="78.65" width="186.71" height="117.68" stroke="#840000" stroke-width="3.0" fill="#ffffc2"/>
<line x1="2369.16" y1="93.36" x2="2413.29" y2="93.36" stroke="#840000" stroke-width="2.0" stroke-linecap="round"/>
<line x1="2427.29" y1="93.36" x2="2413.29" y2="93.36" stroke="#840000" stroke-width="4.2" stroke-linecap="butt"/>
<text transform="matrix(0.8,0,0,1,2391.48,90.77)" fill="#a90000" font-size="24" text-anchor="middle" letter-spacing="1.2" stroke="#f5f4ef" stroke-width="0.2">1</text>
<rect x="2454.3" y="91.36" width="8" height="4" fill="#d09a74"/>
<line x1="2369.16" y1="122.78" x2="2413.29" y2="122.78" stroke="#840000" stroke-width="2.0" stroke-linecap="round"/>
<rect x="2413.29" y="120.88" width="14" height="3.8" stroke="#840000" stroke-width="1.4" fill="#c8906e"/>
<text transform="matrix(0.8,0,0,1,2391.48,120.19)" fill="#a90000" font-size="24" text-anchor="middle" letter-spacing="1.2" stroke="#f5f4ef" stroke-width="0.2">3</text>
<rect x="2454.3" y="120.78" width="8" height="4" fill="#d09a74"/>
<line x1="2369.16" y1="152.2" x2="2413.29" y2="152.2" stroke="#840000" stroke-width="2.0" stroke-linecap="round"/>
<rect x="2413.29" y="150.3" width="14" height="3.8" stroke="#840000" stroke-width="1.4" fill="#c8906e"/>
<text transform="matrix(0.8,0,0,1,2391.48,149.61)" fill="#a90000" font-size="24" text-anchor="middle" letter-spacing="1.2" stroke="#f5f4ef" stroke-width="0.2">5</text>
<rect x="2454.3" y="150.2" width="8" height="4" fill="#d09a74"/>
<line x1="2369.16" y1="181.62" x2="2413.29" y2="181.62" stroke="#840000" stroke-width="2.0" stroke-linecap="round"/>
<rect x="2413.29" y="179.72" width="14" height="3.8" stroke="#840000" stroke-width="1.4" fill="#c8906e"/>
<text transform="matrix(0.8,0,0,1,2391.48,179.03)" fill="#a90000" font-size="24" text-anchor="middle" letter-spacing="1.2" stroke="#f5f4ef" stroke-width="0.2">7</text>
<rect x="2454.3" y="179.62" width="8" height="4" fill="#d09a74"/>
<polygon points="2339.74,93.36 2327.24,78.86 2183.24,78.86 2183.24,107.86 2327.24,107.86" stroke="#840000" stroke-width="2.0" fill="none" stroke-linejoin="round" stroke-linecap="round"/>
<text transform="matrix(0.78,0,0,1,2195.24,101.77)" fill="#840000" font-size="24" text-anchor="start" letter-spacing="1.2" stroke="#f5f4ef" stroke-width="0.2">DRIVEY<tspan dy="-3.2">_</tspan><tspan dy="3.2">S</tspan>LP</text>
<polyline points="2339.74,93.36 2369.16,93.36" stroke="#009600" stroke-width="2.0" fill="none" stroke-linejoin="round" stroke-linecap="round"/>
<polyline points="2354.45,122.78 2369.16,122.78" stroke="#009600" stroke-width="2.0" fill="none" stroke-linejoin="round" stroke-linecap="round"/>
<polyline points="2354.45,152.2 2369.16,152.2" stroke="#009600" stroke-width="2.0" fill="none" stroke-linejoin="round" stroke-linecap="round"/>
<polyline points="2354.45,181.62 2369.16,181.62" stroke="#009600" stroke-width="2.0" fill="none" stroke-linejoin="round" stroke-linecap="round"/>
<polyline points="2354.45,122.78 2354.45,181.62" stroke="#009600" stroke-width="2.0" fill="none" stroke-linejoin="round" stroke-linecap="round"/>
<line x1="2354.45" y1="122.78" x2="2354.45" y2="93.36" stroke="#840000" stroke-width="2.0" stroke-linecap="round"/>
<polyline points="2345.65,108.07 2354.45,93.36 2363.25,108.07" stroke="#840000" stroke-width="2.0" fill="none" stroke-linejoin="round" stroke-linecap="round"/>
<text transform="matrix(0.92,0,0,1,2281.5,142.7)" fill="#006464" font-size="24" text-anchor="start" letter-spacing="1.2" stroke="#f5f4ef" stroke-width="0.2">+3.3V</text>
<text transform="matrix(0.9,0,0,1,2193.6,145.2)" fill="#006464" font-size="24" text-anchor="start" letter-spacing="1.2" stroke="#f5f4ef" stroke-width="0.2">J12</text>
<text transform="matrix(0.87,0,0,1,2089.2,175.2)" fill="#006464" font-size="24" text-anchor="start" letter-spacing="1.2" stroke="#f5f4ef" stroke-width="0.2">Conn<tspan dy="-3.2">_</tspan><tspan dy="3.2">0</tspan>2x04<tspan dy="-3.2">_</tspan><tspan dy="3.2">O</tspan>dd<tspan dy="-3.2">_</tspan><tspan dy="3.2">E</tspan>ven</text>
<line x1="1957.28" y1="240.46" x2="2470" y2="240.46" stroke="#0000c2" stroke-width="2.2" stroke-linecap="butt"/>
<text transform="matrix(0.77,0,0,1,1985.8,294.11)" fill="#0000c2" font-size="46" text-anchor="start" stroke="#f5f4ef" stroke-width="1.4">Z</text>
<line x1="2018" y1="281.4" x2="2041" y2="281.4" stroke="#0000c2" stroke-width="2.1" stroke-linecap="round"/>
<text transform="matrix(0.64,0,0,1,2052.7,294.11)" fill="#0000c2" font-size="46" text-anchor="start" letter-spacing="9.5" stroke="#f5f4ef" stroke-width="1.4">DRIVE</text>
<text transform="matrix(0.91,0,0,1,2205.2,292.41)" fill="#006464" font-size="24" text-anchor="start" letter-spacing="1.2" stroke="#f5f4ef" stroke-width="0.2">+3.3V</text>
<text transform="matrix(0.8,0,0,1,2295,292.41)" fill="#006464" font-size="24" text-anchor="start" letter-spacing="1.2" stroke="#f5f4ef" stroke-width="0.2">TMC2209<tspan dy="-3.2">_</tspan><tspan dy="3.2">S</tspan>ILENTSTEPSTICK</text>
<rect x="2295.61" y="314.01" width="304.39" height="470.72" stroke="#840000" stroke-width="3.0" fill="#ffffc2"/>
<line x1="2236.77" y1="431.69" x2="2295.61" y2="431.69" stroke="#840000" stroke-width="2.0" stroke-linecap="round"/>
<text transform="matrix(0.8,0,0,1,2266.59,429.5)" fill="#a90000" font-size="20" text-anchor="middle" letter-spacing="1" stroke="#f5f4ef" stroke-width="0.2">16</text>
<text transform="matrix(0.8,0,0,1,2311,438.7)" fill="#006464" font-size="20" text-anchor="start" letter-spacing="1" stroke="#ffffc2" stroke-width="0.2">EN</text>
<line x1="2236.77" y1="490.53" x2="2295.61" y2="490.53" stroke="#840000" stroke-width="2.0" stroke-linecap="round"/>
<text transform="matrix(0.8,0,0,1,2266.59,488.34)" fill="#a90000" font-size="20" text-anchor="middle" letter-spacing="1" stroke="#f5f4ef" stroke-width="0.2">10</text>
<text transform="matrix(0.8,0,0,1,2311,497.54)" fill="#006464" font-size="20" text-anchor="start" letter-spacing="1" stroke="#ffffc2" stroke-width="0.2">STEP</text>
<line x1="2236.77" y1="519.95" x2="2295.61" y2="519.95" stroke="#840000" stroke-width="2.0" stroke-linecap="round"/>
<text transform="matrix(0.8,0,0,1,2266.59,517.76)" fill="#a90000" font-size="20" text-anchor="middle" letter-spacing="1" stroke="#f5f4ef" stroke-width="0.2">9</text>
<text transform="matrix(0.8,0,0,1,2311,526.96)" fill="#006464" font-size="20" text-anchor="start" letter-spacing="1" stroke="#ffffc2" stroke-width="0.2">DIR</text>
<line x1="2236.77" y1="578.79" x2="2295.61" y2="578.79" stroke="#840000" stroke-width="2.0" stroke-linecap="round"/>
<text transform="matrix(0.8,0,0,1,2266.59,576.6)" fill="#a90000" font-size="20" text-anchor="middle" letter-spacing="1" stroke="#f5f4ef" stroke-width="0.2">15</text>
<text transform="matrix(0.8,0,0,1,2311,585.8)" fill="#006464" font-size="20" text-anchor="start" letter-spacing="1" stroke="#ffffc2" stroke-width="0.2">MS1</text>
<line x1="2236.77" y1="608.21" x2="2295.61" y2="608.21" stroke="#840000" stroke-width="2.0" stroke-linecap="round"/>
<text transform="matrix(0.8,0,0,1,2266.59,606.01)" fill="#a90000" font-size="20" text-anchor="middle" letter-spacing="1" stroke="#f5f4ef" stroke-width="0.2">14</text>
<text transform="matrix(0.8,0,0,1,2311,615.22)" fill="#006464" font-size="20" text-anchor="start" letter-spacing="1" stroke="#ffffc2" stroke-width="0.2">MS2</text>
<line x1="2236.77" y1="637.63" x2="2295.61" y2="637.63" stroke="#840000" stroke-width="2.0" stroke-linecap="round"/>
<text transform="matrix(0.8,0,0,1,2266.59,635.44)" fill="#a90000" font-size="20" text-anchor="middle" letter-spacing="1" stroke="#f5f4ef" stroke-width="0.2">13</text>
<text transform="matrix(0.8,0,0,1,2311,644.64)" fill="#006464" font-size="20" text-anchor="start" letter-spacing="1" stroke="#ffffc2" stroke-width="0.2">SPRD</text>
<line x1="2236.77" y1="667.05" x2="2295.61" y2="667.05" stroke="#840000" stroke-width="2.0" stroke-linecap="round"/>
<text transform="matrix(0.8,0,0,1,2266.59,664.86)" fill="#a90000" font-size="20" text-anchor="middle" letter-spacing="1" stroke="#f5f4ef" stroke-width="0.2">11</text>
<text transform="matrix(0.8,0,0,1,2311,674.06)" fill="#006464" font-size="20" text-anchor="start" letter-spacing="1" stroke="#ffffc2" stroke-width="0.2">PDN</text>
<line x1="2236.77" y1="696.47" x2="2295.61" y2="696.47" stroke="#840000" stroke-width="2.0" stroke-linecap="round"/>
<text transform="matrix(0.8,0,0,1,2266.59,694.27)" fill="#a90000" font-size="20" text-anchor="middle" letter-spacing="1" stroke="#f5f4ef" stroke-width="0.2">12</text>
<text transform="matrix(0.8,0,0,1,2311,703.48)" fill="#006464" font-size="20" text-anchor="start" letter-spacing="1" stroke="#ffffc2" stroke-width="0.2">UART</text>
<line x1="2311" y1="422.19" x2="2334.03" y2="422.19" stroke="#006464" stroke-width="1.6" stroke-linecap="butt"/>
<rect x="2224.97" y="358.14" width="23.6" height="58.84" stroke="#840000" stroke-width="3.0" fill="none"/>
<line x1="2236.77" y1="343.43" x2="2236.77" y2="358.14" stroke="#840000" stroke-width="2.0" stroke-linecap="round"/>
<line x1="2236.77" y1="416.98" x2="2236.77" y2="431.69" stroke="#840000" stroke-width="2.0" stroke-linecap="round"/>
<line x1="2236.77" y1="343.43" x2="2236.77" y2="314.01" stroke="#840000" stroke-width="2.0" stroke-linecap="round"/>
<polyline points="2227.97,328.72 2236.77,314.01 2245.57,328.72" stroke="#840000" stroke-width="2.0" fill="none" stroke-linejoin="round" stroke-linecap="round"/>
<polyline points="2222.06,431.69 2236.77,431.69" stroke="#009600" stroke-width="2.0" fill="none" stroke-linejoin="round" stroke-linecap="round"/>
<polygon points="2222.06,431.69 2209.56,417.19 2077.06,417.19 2077.06,446.19 2209.56,446.19" stroke="#840000" stroke-width="2.0" fill="none" stroke-linejoin="round" stroke-linecap="round"/>
<text transform="matrix(0.78,0,0,1,2089.06,440.1)" fill="#840000" font-size="24" text-anchor="start" letter-spacing="1.2" stroke="#f5f4ef" stroke-width="0.2">DRIVEZ<tspan dy="-3.2">_</tspan><tspan dy="3.2">E</tspan>N</text>
<text transform="matrix(0.89,0,0,1,2176.2,384.41)" fill="#006464" font-size="24" text-anchor="start" letter-spacing="1.2" stroke="#f5f4ef" stroke-width="0.2">R23</text>
<text transform="matrix(0.94,0,0,1,2175.2,413.41)" fill="#006464" font-size="24" text-anchor="start" letter-spacing="1.2" stroke="#f5f4ef" stroke-width="0.2">10K</text>
<polygon points="2236.77,490.53 2224.27,476.03 2066.9,476.03 2066.9,505.03 2224.27,505.03" stroke="#840000" stroke-width="2.0" fill="none" stroke-linejoin="round" stroke-linecap="round"/>
<text transform="matrix(0.78,0,0,1,2078.9,498.94)" fill="#840000" font-size="24" text-anchor="start" letter-spacing="1.2" stroke="#f5f4ef" stroke-width="0.2">DRIVEZ<tspan dy="-3.2">_</tspan><tspan dy="3.2">S</tspan>TEP</text>
<polygon points="2236.77,519.95 2224.27,505.45 2084.2,505.45 2084.2,534.45 2224.27,534.45" stroke="#840000" stroke-width="2.0" fill="none" stroke-linejoin="round" stroke-linecap="round"/>
<text transform="matrix(0.78,0,0,1,2096.2,528.36)" fill="#840000" font-size="24" text-anchor="start" letter-spacing="1.2" stroke="#f5f4ef" stroke-width="0.2">DRIVEZ<tspan dy="-3.2">_</tspan><tspan dy="3.2">D</tspan>IR</text>
<polygon points="2236.77,578.79 2224.27,564.29 2066.9,564.29 2066.9,593.29 2224.27,593.29" stroke="#840000" stroke-width="2.0" fill="none" stroke-linejoin="round" stroke-linecap="round"/>
<text transform="matrix(0.79,0,0,1,2078.9,587.2)" fill="#840000" font-size="24" text-anchor="start" letter-spacing="1.2" stroke="#f5f4ef" stroke-width="0.2">DRIVEZ<tspan dy="-3.2">_</tspan><tspan dy="3.2">M</tspan>OSI</text>
<polygon points="2236.77,608.21 2224.27,593.71 2077.5,593.71 2077.5,622.71 2224.27,622.71" stroke="#840000" stroke-width="2.0" fill="none" stroke-linejoin="round" stroke-linecap="round"/>
<text transform="matrix(0.78,0,0,1,2089.5,616.62)" fill="#840000" font-size="24" text-anchor="start" letter-spacing="1.2" stroke="#f5f4ef" stroke-width="0.2">DRIVEZ<tspan dy="-3.2">_</tspan><tspan dy="3.2">S</tspan>CK</text>
<polygon points="2236.77,637.63 2224.27,623.13 2092.4,623.13 2092.4,652.13 2224.27,652.13" stroke="#840000" stroke-width="2.0" fill="none" stroke-linejoin="round" stroke-linecap="round"/>
<text transform="matrix(0.77,0,0,1,2104.4,646.04)" fill="#840000" font-size="24" text-anchor="start" letter-spacing="1.2" stroke="#f5f4ef" stroke-width="0.2">DRIVEZ<tspan dy="-3.2">_</tspan><tspan dy="3.2">C</tspan>S</text>
<polygon points="2236.77,667.05 2224.27,652.55 2066.9,652.55 2066.9,681.55 2224.27,681.55" stroke="#840000" stroke-width="2.0" fill="none" stroke-linejoin="round" stroke-linecap="round"/>
<text transform="matrix(0.79,0,0,1,2078.9,675.46)" fill="#840000" font-size="24" text-anchor="start" letter-spacing="1.2" stroke="#f5f4ef" stroke-width="0.2">DRIVEZ<tspan dy="-3.2">_</tspan><tspan dy="3.2">M</tspan>ISO</text>
<polygon points="2236.77,696.47 2224.27,681.97 2080.2,681.97 2080.2,710.97 2224.27,710.97" stroke="#840000" stroke-width="2.0" fill="none" stroke-linejoin="round" stroke-linecap="round"/>
<text transform="matrix(0.79,0,0,1,2092.2,704.88)" fill="#840000" font-size="24" text-anchor="start" letter-spacing="1.2" stroke="#f5f4ef" stroke-width="0.2">DRIVEZ<tspan dy="-3.2">_</tspan><tspan dy="3.2">S</tspan>LP</text>
<rect x="2413.29" y="828.86" width="186.71" height="117.68" stroke="#840000" stroke-width="3.0" fill="#ffffc2"/>
<line x1="2369.16" y1="843.57" x2="2413.29" y2="843.57" stroke="#840000" stroke-width="2.0" stroke-linecap="round"/>
<rect x="2413.29" y="841.67" width="14" height="3.8" stroke="#840000" stroke-width="1.4" fill="#c8906e"/>
<text transform="matrix(0.8,0,0,1,2391.48,840.98)" fill="#a90000" font-size="24" text-anchor="middle" letter-spacing="1.2" stroke="#f5f4ef" stroke-width="0.2">1</text>
<rect x="2454.3" y="841.57" width="8" height="4" fill="#d09a74"/>
<line x1="2369.16" y1="872.99" x2="2413.29" y2="872.99" stroke="#840000" stroke-width="2.0" stroke-linecap="round"/>
<rect x="2413.29" y="871.09" width="14" height="3.8" stroke="#840000" stroke-width="1.4" fill="#c8906e"/>
<text transform="matrix(0.8,0,0,1,2391.48,870.4)" fill="#a90000" font-size="24" text-anchor="middle" letter-spacing="1.2" stroke="#f5f4ef" stroke-width="0.2">3</text>
<rect x="2454.3" y="870.99" width="8" height="4" fill="#d09a74"/>
<line x1="2369.16" y1="902.41" x2="2413.29" y2="902.41" stroke="#840000" stroke-width="2.0" stroke-linecap="round"/>
<rect x="2413.29" y="900.51" width="14" height="3.8" stroke="#840000" stroke-width="1.4" fill="#c8906e"/>
<text transform="matrix(0.8,0,0,1,2391.48,899.82)" fill="#a90000" font-size="24" text-anchor="middle" letter-spacing="1.2" stroke="#f5f4ef" stroke-width="0.2">5</text>
<rect x="2454.3" y="900.41" width="8" height="4" fill="#d09a74"/>
<line x1="2369.16" y1="931.83" x2="2413.29" y2="931.83" stroke="#840000" stroke-width="2.0" stroke-linecap="round"/>
<rect x="2413.29" y="929.93" width="14" height="3.8" stroke="#840000" stroke-width="1.4" fill="#c8906e"/>
<text transform="matrix(0.8,0,0,1,2391.48,929.24)" fill="#a90000" font-size="24" text-anchor="middle" letter-spacing="1.2" stroke="#f5f4ef" stroke-width="0.2">7</text>
<rect x="2454.3" y="929.83" width="8" height="4" fill="#d09a74"/>
<polygon points="2339.74,843.57 2327.24,829.07 2183.24,829.07 2183.24,858.07 2327.24,858.07" stroke="#840000" stroke-width="2.0" fill="none" stroke-linejoin="round" stroke-linecap="round"/>
<text transform="matrix(0.79,0,0,1,2195.24,851.98)" fill="#840000" font-size="24" text-anchor="start" letter-spacing="1.2" stroke="#f5f4ef" stroke-width="0.2">DRIVEZ<tspan dy="-3.2">_</tspan><tspan dy="3.2">S</tspan>LP</text>
<polyline points="2339.74,843.57 2369.16,843.57" stroke="#009600" stroke-width="2.0" fill="none" stroke-linejoin="round" stroke-linecap="round"/>
<polyline points="2354.45,872.99 2369.16,872.99" stroke="#009600" stroke-width="2.0" fill="none" stroke-linejoin="round" stroke-linecap="round"/>
<polyline points="2354.45,902.41 2369.16,902.41" stroke="#009600" stroke-width="2.0" fill="none" stroke-linejoin="round" stroke-linecap="round"/>
<polyline points="2354.45,931.83 2369.16,931.83" stroke="#009600" stroke-width="2.0" fill="none" stroke-linejoin="round" stroke-linecap="round"/>
<polyline points="2354.45,872.99 2354.45,931.83" stroke="#009600" stroke-width="2.0" fill="none" stroke-linejoin="round" stroke-linecap="round"/>
<line x1="2354.45" y1="872.99" x2="2354.45" y2="843.57" stroke="#840000" stroke-width="2.0" stroke-linecap="round"/>
<polyline points="2345.65,858.28 2354.45,843.57 2363.25,858.28" stroke="#840000" stroke-width="2.0" fill="none" stroke-linejoin="round" stroke-linecap="round"/>
<text transform="matrix(0.92,0,0,1,2281.5,892.91)" fill="#006464" font-size="24" text-anchor="start" letter-spacing="1.2" stroke="#f5f4ef" stroke-width="0.2">+3.3V</text>
<text transform="matrix(0.9,0,0,1,2193.6,895.41)" fill="#006464" font-size="24" text-anchor="start" letter-spacing="1.2" stroke="#f5f4ef" stroke-width="0.2">J22</text>
<text transform="matrix(0.87,0,0,1,2089.2,925.41)" fill="#006464" font-size="24" text-anchor="start" letter-spacing="1.2" stroke="#f5f4ef" stroke-width="0.2">Conn<tspan dy="-3.2">_</tspan><tspan dy="3.2">0</tspan>2x04<tspan dy="-3.2">_</tspan><tspan dy="3.2">O</tspan>dd<tspan dy="-3.2">_</tspan><tspan dy="3.2">E</tspan>ven</text>
<line x1="1957.28" y1="990.67" x2="2470" y2="990.67" stroke="#0000c2" stroke-width="2.2" stroke-linecap="butt"/>
<text transform="matrix(0.71,0,0,1,1985.8,1044.32)" fill="#0000c2" font-size="46" text-anchor="start" stroke="#f5f4ef" stroke-width="1.4">E</text>
<line x1="2018" y1="1031.61" x2="2041" y2="1031.61" stroke="#0000c2" stroke-width="2.1" stroke-linecap="round"/>
<text transform="matrix(0.64,0,0,1,2052.7,1044.32)" fill="#0000c2" font-size="46" text-anchor="start" letter-spacing="9.5" stroke="#f5f4ef" stroke-width="1.4">DRIVE</text>
<text transform="matrix(0.91,0,0,1,2205.2,1042.62)" fill="#006464" font-size="24" text-anchor="start" letter-spacing="1.2" stroke="#f5f4ef" stroke-width="0.2">+3.3V</text>
<text transform="matrix(0.8,0,0,1,2295,1042.62)" fill="#006464" font-size="24" text-anchor="start" letter-spacing="1.2" stroke="#f5f4ef" stroke-width="0.2">TMC2209<tspan dy="-3.2">_</tspan><tspan dy="3.2">S</tspan>ILENTSTEPSTICK</text>
<rect x="2295.61" y="1064.22" width="304.39" height="470.72" stroke="#840000" stroke-width="3.0" fill="#ffffc2"/>
<line x1="2236.77" y1="1181.9" x2="2295.61" y2="1181.9" stroke="#840000" stroke-width="2.0" stroke-linecap="round"/>
<text transform="matrix(0.8,0,0,1,2266.59,1179.71)" fill="#a90000" font-size="20" text-anchor="middle" letter-spacing="1" stroke="#f5f4ef" stroke-width="0.2">16</text>
<text transform="matrix(0.8,0,0,1,2311,1188.91)" fill="#006464" font-size="20" text-anchor="start" letter-spacing="1" stroke="#ffffc2" stroke-width="0.2">EN</text>
<line x1="2236.77" y1="1240.74" x2="2295.61" y2="1240.74" stroke="#840000" stroke-width="2.0" stroke-linecap="round"/>
<text transform="matrix(0.8,0,0,1,2266.59,1238.55)" fill="#a90000" font-size="20" text-anchor="middle" letter-spacing="1" stroke="#f5f4ef" stroke-width="0.2">10</text>
<text transform="matrix(0.8,0,0,1,2311,1247.75)" fill="#006464" font-size="20" text-anchor="start" letter-spacing="1" stroke="#ffffc2" stroke-width="0.2">STEP</text>
<line x1="2236.77" y1="1270.16" x2="2295.61" y2="1270.16" stroke="#840000" stroke-width="2.0" stroke-linecap="round"/>
<text transform="matrix(0.8,0,0,1,2266.59,1267.97)" fill="#a90000" font-size="20" text-anchor="middle" letter-spacing="1" stroke="#f5f4ef" stroke-width="0.2">9</text>
<text transform="matrix(0.8,0,0,1,2311,1277.17)" fill="#006464" font-size="20" text-anchor="start" letter-spacing="1" stroke="#ffffc2" stroke-width="0.2">DIR</text>
<line x1="2236.77" y1="1329" x2="2295.61" y2="1329" stroke="#840000" stroke-width="2.0" stroke-linecap="round"/>
<text transform="matrix(0.8,0,0,1,2266.59,1326.81)" fill="#a90000" font-size="20" text-anchor="middle" letter-spacing="1" stroke="#f5f4ef" stroke-width="0.2">15</text>
<text transform="matrix(0.8,0,0,1,2311,1336.01)" fill="#006464" font-size="20" text-anchor="start" letter-spacing="1" stroke="#ffffc2" stroke-width="0.2">MS1</text>
<line x1="2236.77" y1="1358.42" x2="2295.61" y2="1358.42" stroke="#840000" stroke-width="2.0" stroke-linecap="round"/>
<text transform="matrix(0.8,0,0,1,2266.59,1356.23)" fill="#a90000" font-size="20" text-anchor="middle" letter-spacing="1" stroke="#f5f4ef" stroke-width="0.2">14</text>
<text transform="matrix(0.8,0,0,1,2311,1365.43)" fill="#006464" font-size="20" text-anchor="start" letter-spacing="1" stroke="#ffffc2" stroke-width="0.2">MS2</text>
<line x1="2236.77" y1="1387.84" x2="2295.61" y2="1387.84" stroke="#840000" stroke-width="2.0" stroke-linecap="round"/>
<text transform="matrix(0.8,0,0,1,2266.59,1385.64)" fill="#a90000" font-size="20" text-anchor="middle" letter-spacing="1" stroke="#f5f4ef" stroke-width="0.2">13</text>
<text transform="matrix(0.8,0,0,1,2311,1394.85)" fill="#006464" font-size="20" text-anchor="start" letter-spacing="1" stroke="#ffffc2" stroke-width="0.2">SPRD</text>
<line x1="2236.77" y1="1417.26" x2="2295.61" y2="1417.26" stroke="#840000" stroke-width="2.0" stroke-linecap="round"/>
<text transform="matrix(0.8,0,0,1,2266.59,1415.07)" fill="#a90000" font-size="20" text-anchor="middle" letter-spacing="1" stroke="#f5f4ef" stroke-width="0.2">11</text>
<text transform="matrix(0.8,0,0,1,2311,1424.27)" fill="#006464" font-size="20" text-anchor="start" letter-spacing="1" stroke="#ffffc2" stroke-width="0.2">PDN</text>
<line x1="2236.77" y1="1446.68" x2="2295.61" y2="1446.68" stroke="#840000" stroke-width="2.0" stroke-linecap="round"/>
<text transform="matrix(0.8,0,0,1,2266.59,1444.49)" fill="#a90000" font-size="20" text-anchor="middle" letter-spacing="1" stroke="#f5f4ef" stroke-width="0.2">12</text>
<text transform="matrix(0.8,0,0,1,2311,1453.69)" fill="#006464" font-size="20" text-anchor="start" letter-spacing="1" stroke="#ffffc2" stroke-width="0.2">UART</text>
<line x1="2311" y1="1172.4" x2="2334.03" y2="1172.4" stroke="#006464" stroke-width="1.6" stroke-linecap="butt"/>
<rect x="2224.97" y="1108.35" width="23.6" height="58.84" stroke="#840000" stroke-width="3.0" fill="none"/>
<line x1="2236.77" y1="1093.64" x2="2236.77" y2="1108.35" stroke="#840000" stroke-width="2.0" stroke-linecap="round"/>
<line x1="2236.77" y1="1167.19" x2="2236.77" y2="1181.9" stroke="#840000" stroke-width="2.0" stroke-linecap="round"/>
<line x1="2236.77" y1="1093.64" x2="2236.77" y2="1064.22" stroke="#840000" stroke-width="2.0" stroke-linecap="round"/>
<polyline points="2227.97,1078.93 2236.77,1064.22 2245.57,1078.93" stroke="#840000" stroke-width="2.0" fill="none" stroke-linejoin="round" stroke-linecap="round"/>
<polyline points="2222.06,1181.9 2236.77,1181.9" stroke="#009600" stroke-width="2.0" fill="none" stroke-linejoin="round" stroke-linecap="round"/>
<polygon points="2222.06,1181.9 2209.56,1167.4 2077.06,1167.4 2077.06,1196.4 2209.56,1196.4" stroke="#840000" stroke-width="2.0" fill="none" stroke-linejoin="round" stroke-linecap="round"/>
<text transform="matrix(0.77,0,0,1,2089.06,1190.31)" fill="#840000" font-size="24" text-anchor="start" letter-spacing="1.2" stroke="#f5f4ef" stroke-width="0.2">DRIVEE<tspan dy="-3.2">_</tspan><tspan dy="3.2">E</tspan>N</text>
<text transform="matrix(0.89,0,0,1,2176.2,1134.62)" fill="#006464" font-size="24" text-anchor="start" letter-spacing="1.2" stroke="#f5f4ef" stroke-width="0.2">R26</text>
<text transform="matrix(0.94,0,0,1,2175.2,1163.62)" fill="#006464" font-size="24" text-anchor="start" letter-spacing="1.2" stroke="#f5f4ef" stroke-width="0.2">10K</text>
<polygon points="2236.77,1240.74 2224.27,1226.24 2066.9,1226.24 2066.9,1255.24 2224.27,1255.24" stroke="#840000" stroke-width="2.0" fill="none" stroke-linejoin="round" stroke-linecap="round"/>
<text transform="matrix(0.77,0,0,1,2078.9,1249.15)" fill="#840000" font-size="24" text-anchor="start" letter-spacing="1.2" stroke="#f5f4ef" stroke-width="0.2">DRIVEE<tspan dy="-3.2">_</tspan><tspan dy="3.2">S</tspan>TEP</text>
<polygon points="2236.77,1270.16 2224.27,1255.66 2084.2,1255.66 2084.2,1284.66 2224.27,1284.66" stroke="#840000" stroke-width="2.0" fill="none" stroke-linejoin="round" stroke-linecap="round"/>
<text transform="matrix(0.77,0,0,1,2096.2,1278.57)" fill="#840000" font-size="24" text-anchor="start" letter-spacing="1.2" stroke="#f5f4ef" stroke-width="0.2">DRIVEE<tspan dy="-3.2">_</tspan><tspan dy="3.2">D</tspan>IR</text>
<polygon points="2236.77,1329 2224.27,1314.5 2066.9,1314.5 2066.9,1343.5 2224.27,1343.5" stroke="#840000" stroke-width="2.0" fill="none" stroke-linejoin="round" stroke-linecap="round"/>
<text transform="matrix(0.78,0,0,1,2078.9,1337.41)" fill="#840000" font-size="24" text-anchor="start" letter-spacing="1.2" stroke="#f5f4ef" stroke-width="0.2">DRIVEE<tspan dy="-3.2">_</tspan><tspan dy="3.2">M</tspan>OSI</text>
<polygon points="2236.77,1358.42 2224.27,1343.92 2077.5,1343.92 2077.5,1372.92 2224.27,1372.92" stroke="#840000" stroke-width="2.0" fill="none" stroke-linejoin="round" stroke-linecap="round"/>
<text transform="matrix(0.78,0,0,1,2089.5,1366.83)" fill="#840000" font-size="24" text-anchor="start" letter-spacing="1.2" stroke="#f5f4ef" stroke-width="0.2">DRIVEE<tspan dy="-3.2">_</tspan><tspan dy="3.2">S</tspan>CK</text>
<polygon points="2236.77,1387.84 2224.27,1373.34 2092.4,1373.34 2092.4,1402.34 2224.27,1402.34" stroke="#840000" stroke-width="2.0" fill="none" stroke-linejoin="round" stroke-linecap="round"/>
<text transform="matrix(0.77,0,0,1,2104.4,1396.25)" fill="#840000" font-size="24" text-anchor="start" letter-spacing="1.2" stroke="#f5f4ef" stroke-width="0.2">DRIVEE<tspan dy="-3.2">_</tspan><tspan dy="3.2">C</tspan>S</text>
<polygon points="2236.77,1417.26 2224.27,1402.76 2066.9,1402.76 2066.9,1431.76 2224.27,1431.76" stroke="#840000" stroke-width="2.0" fill="none" stroke-linejoin="round" stroke-linecap="round"/>
<text transform="matrix(0.78,0,0,1,2078.9,1425.67)" fill="#840000" font-size="24" text-anchor="start" letter-spacing="1.2" stroke="#f5f4ef" stroke-width="0.2">DRIVEE<tspan dy="-3.2">_</tspan><tspan dy="3.2">M</tspan>ISO</text>
<polygon points="2236.77,1446.68 2224.27,1432.18 2080.2,1432.18 2080.2,1461.18 2224.27,1461.18" stroke="#840000" stroke-width="2.0" fill="none" stroke-linejoin="round" stroke-linecap="round"/>
<text transform="matrix(0.78,0,0,1,2092.2,1455.09)" fill="#840000" font-size="24" text-anchor="start" letter-spacing="1.2" stroke="#f5f4ef" stroke-width="0.2">DRIVEE<tspan dy="-3.2">_</tspan><tspan dy="3.2">S</tspan>LP</text>
<rect x="2413.29" y="1579.07" width="186.71" height="117.68" stroke="#840000" stroke-width="3.0" fill="#ffffc2"/>
<line x1="2369.16" y1="1593.78" x2="2413.29" y2="1593.78" stroke="#840000" stroke-width="2.0" stroke-linecap="round"/>
<rect x="2413.29" y="1591.88" width="14" height="3.8" stroke="#840000" stroke-width="1.4" fill="#c8906e"/>
<text transform="matrix(0.8,0,0,1,2391.48,1591.19)" fill="#a90000" font-size="24" text-anchor="middle" letter-spacing="1.2" stroke="#f5f4ef" stroke-width="0.2">1</text>
<rect x="2454.3" y="1591.78" width="8" height="4" fill="#d09a74"/>
<line x1="2369.16" y1="1623.2" x2="2413.29" y2="1623.2" stroke="#840000" stroke-width="2.0" stroke-linecap="round"/>
<rect x="2413.29" y="1621.3" width="14" height="3.8" stroke="#840000" stroke-width="1.4" fill="#c8906e"/>
<text transform="matrix(0.8,0,0,1,2391.48,1620.61)" fill="#a90000" font-size="24" text-anchor="middle" letter-spacing="1.2" stroke="#f5f4ef" stroke-width="0.2">3</text>
<rect x="2454.3" y="1621.2" width="8" height="4" fill="#d09a74"/>
<line x1="2369.16" y1="1652.62" x2="2413.29" y2="1652.62" stroke="#840000" stroke-width="2.0" stroke-linecap="round"/>
<rect x="2413.29" y="1650.72" width="14" height="3.8" stroke="#840000" stroke-width="1.4" fill="#c8906e"/>
<text transform="matrix(0.8,0,0,1,2391.48,1650.03)" fill="#a90000" font-size="24" text-anchor="middle" letter-spacing="1.2" stroke="#f5f4ef" stroke-width="0.2">5</text>
<rect x="2454.3" y="1650.62" width="8" height="4" fill="#d09a74"/>
<line x1="2369.16" y1="1682.04" x2="2413.29" y2="1682.04" stroke="#840000" stroke-width="2.0" stroke-linecap="round"/>
<rect x="2413.29" y="1680.14" width="14" height="3.8" stroke="#840000" stroke-width="1.4" fill="#c8906e"/>
<text transform="matrix(0.8,0,0,1,2391.48,1679.45)" fill="#a90000" font-size="24" text-anchor="middle" letter-spacing="1.2" stroke="#f5f4ef" stroke-width="0.2">7</text>
<rect x="2454.3" y="1680.04" width="8" height="4" fill="#d09a74"/>
<polygon points="2339.74,1593.78 2327.24,1579.28 2183.24,1579.28 2183.24,1608.28 2327.24,1608.28" stroke="#840000" stroke-width="2.0" fill="none" stroke-linejoin="round" stroke-linecap="round"/>
<text transform="matrix(0.78,0,0,1,2195.24,1602.19)" fill="#840000" font-size="24" text-anchor="start" letter-spacing="1.2" stroke="#f5f4ef" stroke-width="0.2">DRIVEE<tspan dy="-3.2">_</tspan><tspan dy="3.2">S</tspan>LP</text>
<polyline points="2339.74,1593.78 2369.16,1593.78" stroke="#009600" stroke-width="2.0" fill="none" stroke-linejoin="round" stroke-linecap="round"/>
<polyline points="2354.45,1623.2 2369.16,1623.2" stroke="#009600" stroke-width="2.0" fill="none" stroke-linejoin="round" stroke-linecap="round"/>
<polyline points="2354.45,1652.62 2369.16,1652.62" stroke="#009600" stroke-width="2.0" fill="none" stroke-linejoin="round" stroke-linecap="round"/>
<polyline points="2354.45,1682.04 2369.16,1682.04" stroke="#009600" stroke-width="2.0" fill="none" stroke-linejoin="round" stroke-linecap="round"/>
<polyline points="2354.45,1623.2 2354.45,1682.04" stroke="#009600" stroke-width="2.0" fill="none" stroke-linejoin="round" stroke-linecap="round"/>
<line x1="2354.45" y1="1623.2" x2="2354.45" y2="1593.78" stroke="#840000" stroke-width="2.0" stroke-linecap="round"/>
<polyline points="2345.65,1608.49 2354.45,1593.78 2363.25,1608.49" stroke="#840000" stroke-width="2.0" fill="none" stroke-linejoin="round" stroke-linecap="round"/>
<text transform="matrix(0.92,0,0,1,2281.5,1643.12)" fill="#006464" font-size="24" text-anchor="start" letter-spacing="1.2" stroke="#f5f4ef" stroke-width="0.2">+3.3V</text>
<text transform="matrix(0.9,0,0,1,2193.6,1645.62)" fill="#006464" font-size="24" text-anchor="start" letter-spacing="1.2" stroke="#f5f4ef" stroke-width="0.2">J32</text>
<text transform="matrix(0.87,0,0,1,2089.2,1675.62)" fill="#006464" font-size="24" text-anchor="start" letter-spacing="1.2" stroke="#f5f4ef" stroke-width="0.2">Conn<tspan dy="-3.2">_</tspan><tspan dy="3.2">0</tspan>2x04<tspan dy="-3.2">_</tspan><tspan dy="3.2">O</tspan>dd<tspan dy="-3.2">_</tspan><tspan dy="3.2">E</tspan>ven</text>
<line x1="1957.28" y1="60" x2="1957.28" y2="1400" stroke="#0000c2" stroke-width="2.2" stroke-linecap="butt"/>
<polyline points="20,622.92 721.64,622.92 721.64,1049.51 20,1049.51" stroke="#0000c2" stroke-width="2.2" fill="none" stroke-linejoin="round" stroke-linecap="round"/>
<rect x="15.56" y="696.47" width="29.42" height="294.2" stroke="#840000" stroke-width="3.0" fill="#ffffc2"/>
<line x1="44.98" y1="711.18" x2="89.11" y2="711.18" stroke="#840000" stroke-width="2.0" stroke-linecap="round"/>
<text transform="matrix(0.8,0,0,1,67.53,708.59)" fill="#a90000" font-size="24" text-anchor="middle" letter-spacing="1.2" stroke="#f5f4ef" stroke-width="0.2">1</text>
<line x1="30.98" y1="711.18" x2="44.98" y2="711.18" stroke="#840000" stroke-width="4.2" stroke-linecap="butt"/>
<line x1="44.98" y1="740.6" x2="89.11" y2="740.6" stroke="#840000" stroke-width="2.0" stroke-linecap="round"/>
<text transform="matrix(0.8,0,0,1,67.53,738.01)" fill="#a90000" font-size="24" text-anchor="middle" letter-spacing="1.2" stroke="#f5f4ef" stroke-width="0.2">2</text>
<rect x="30.98" y="738.7" width="14" height="3.8" stroke="#840000" stroke-width="1.4" fill="#c8906e"/>
<line x1="44.98" y1="770.02" x2="89.11" y2="770.02" stroke="#840000" stroke-width="2.0" stroke-linecap="round"/>
<text transform="matrix(0.8,0,0,1,67.53,767.43)" fill="#a90000" font-size="24" text-anchor="middle" letter-spacing="1.2" stroke="#f5f4ef" stroke-width="0.2">3</text>
<rect x="30.98" y="768.12" width="14" height="3.8" stroke="#840000" stroke-width="1.4" fill="#c8906e"/>
<line x1="44.98" y1="799.44" x2="89.11" y2="799.44" stroke="#840000" stroke-width="2.0" stroke-linecap="round"/>
<text transform="matrix(0.8,0,0,1,67.53,796.85)" fill="#a90000" font-size="24" text-anchor="middle" letter-spacing="1.2" stroke="#f5f4ef" stroke-width="0.2">4</text>
<rect x="30.98" y="797.54" width="14" height="3.8" stroke="#840000" stroke-width="1.4" fill="#c8906e"/>
<line x1="44.98" y1="828.86" x2="89.11" y2="828.86" stroke="#840000" stroke-width="2.0" stroke-linecap="round"/>
<text transform="matrix(0.8,0,0,1,67.53,826.27)" fill="#a90000" font-size="24" text-anchor="middle" letter-spacing="1.2" stroke="#f5f4ef" stroke-width="0.2">5</text>
<rect x="30.98" y="826.96" width="14" height="3.8" stroke="#840000" stroke-width="1.4" fill="#c8906e"/>
<line x1="44.98" y1="858.28" x2="89.11" y2="858.28" stroke="#840000" stroke-width="2.0" stroke-linecap="round"/>
<text transform="matrix(0.8,0,0,1,67.53,855.69)" fill="#a90000" font-size="24" text-anchor="middle" letter-spacing="1.2" stroke="#f5f4ef" stroke-width="0.2">6</text>
<rect x="30.98" y="856.38" width="14" height="3.8" stroke="#840000" stroke-width="1.4" fill="#c8906e"/>
<line x1="44.98" y1="887.7" x2="89.11" y2="887.7" stroke="#840000" stroke-width="2.0" stroke-linecap="round"/>
<text transform="matrix(0.8,0,0,1,67.53,885.11)" fill="#a90000" font-size="24" text-anchor="middle" letter-spacing="1.2" stroke="#f5f4ef" stroke-width="0.2">7</text>
<rect x="30.98" y="885.8" width="14" height="3.8" stroke="#840000" stroke-width="1.4" fill="#c8906e"/>
<line x1="44.98" y1="917.12" x2="89.11" y2="917.12" stroke="#840000" stroke-width="2.0" stroke-linecap="round"/>
<text transform="matrix(0.8,0,0,1,67.53,914.53)" fill="#a90000" font-size="24" text-anchor="middle" letter-spacing="1.2" stroke="#f5f4ef" stroke-width="0.2">8</text>
<line x1="30.98" y1="917.12" x2="44.98" y2="917.12" stroke="#840000" stroke-width="4.2" stroke-linecap="butt"/>
<line x1="44.98" y1="946.54" x2="89.11" y2="946.54" stroke="#840000" stroke-width="2.0" stroke-linecap="round"/>
<text transform="matrix(0.8,0,0,1,67.53,943.95)" fill="#a90000" font-size="24" text-anchor="middle" letter-spacing="1.2" stroke="#f5f4ef" stroke-width="0.2">9</text>
<rect x="30.98" y="944.64" width="14" height="3.8" stroke="#840000" stroke-width="1.4" fill="#c8906e"/>
<line x1="44.98" y1="975.96" x2="89.11" y2="975.96" stroke="#840000" stroke-width="2.0" stroke-linecap="round"/>
<text transform="matrix(0.8,0,0,1,67.53,973.37)" fill="#a90000" font-size="24" text-anchor="middle" letter-spacing="1.2" stroke="#f5f4ef" stroke-width="0.2">10</text>
<rect x="30.98" y="974.06" width="14" height="3.8" stroke="#840000" stroke-width="1.4" fill="#c8906e"/>
<polygon points="89.11,711.18 101.61,696.68 226.11,696.68 226.11,725.68 101.61,725.68" stroke="#840000" stroke-width="2.0" fill="none" stroke-linejoin="round" stroke-linecap="round"/>
<text transform="matrix(0.78,0,0,1,108.61,719.59)" fill="#840000" font-size="24" text-anchor="start" letter-spacing="1.2" stroke="#f5f4ef" stroke-width="0.2">LCD<tspan dy="-3.2">_</tspan><tspan dy="3.2">B</tspan>EEP</text>
<polygon points="89.11,740.6 101.61,726.1 210.61,726.1 210.61,755.1 101.61,755.1" stroke="#840000" stroke-width="2.0" fill="none" stroke-linejoin="round" stroke-linecap="round"/>
<text transform="matrix(0.76,0,0,1,108.61,749.01)" fill="#840000" font-size="24" text-anchor="start" letter-spacing="1.2" stroke="#f5f4ef" stroke-width="0.2">LCD<tspan dy="-3.2">_</tspan><tspan dy="3.2">B</tspan>TN</text>
<polygon points="89.11,770.02 101.61,755.52 197.11,755.52 197.11,784.52 101.61,784.52" stroke="#840000" stroke-width="2.0" fill="none" stroke-linejoin="round" stroke-linecap="round"/>
<text transform="matrix(0.75,0,0,1,108.61,778.43)" fill="#840000" font-size="24" text-anchor="start" letter-spacing="1.2" stroke="#f5f4ef" stroke-width="0.2">LCD<tspan dy="-3.2">_</tspan><tspan dy="3.2">E</tspan>N</text>
<polygon points="89.11,799.44 101.61,784.94 197.11,784.94 197.11,813.94 101.61,813.94" stroke="#840000" stroke-width="2.0" fill="none" stroke-linejoin="round" stroke-linecap="round"/>
<text transform="matrix(0.75,0,0,1,108.61,807.85)" fill="#840000" font-size="24" text-anchor="start" letter-spacing="1.2" stroke="#f5f4ef" stroke-width="0.2">LCD<tspan dy="-3.2">_</tspan><tspan dy="3.2">C</tspan>S</text>
<polygon points="89.11,828.86 101.61,814.36 197.11,814.36 197.11,843.36 101.61,843.36" stroke="#840000" stroke-width="2.0" fill="none" stroke-linejoin="round" stroke-linecap="round"/>
<text transform="matrix(0.77,0,0,1,108.61,837.27)" fill="#840000" font-size="24" text-anchor="start" letter-spacing="1.2" stroke="#f5f4ef" stroke-width="0.2">LCD<tspan dy="-3.2">_</tspan><tspan dy="3.2">D</tspan>4</text>
<polygon points="89.11,858.28 101.61,843.78 197.11,843.78 197.11,872.78 101.61,872.78" stroke="#840000" stroke-width="2.0" fill="none" stroke-linejoin="round" stroke-linecap="round"/>
<text transform="matrix(0.77,0,0,1,108.61,866.69)" fill="#840000" font-size="24" text-anchor="start" letter-spacing="1.2" stroke="#f5f4ef" stroke-width="0.2">LCD<tspan dy="-3.2">_</tspan><tspan dy="3.2">D</tspan>5</text>
<polygon points="89.11,887.7 101.61,873.2 197.11,873.2 197.11,902.2 101.61,902.2" stroke="#840000" stroke-width="2.0" fill="none" stroke-linejoin="round" stroke-linecap="round"/>
<text transform="matrix(0.77,0,0,1,108.61,896.11)" fill="#840000" font-size="24" text-anchor="start" letter-spacing="1.2" stroke="#f5f4ef" stroke-width="0.2">LCD<tspan dy="-3.2">_</tspan><tspan dy="3.2">D</tspan>6</text>
<polygon points="89.11,917.12 101.61,902.62 197.11,902.62 197.11,931.62 101.61,931.62" stroke="#840000" stroke-width="2.0" fill="none" stroke-linejoin="round" stroke-linecap="round"/>
<text transform="matrix(0.77,0,0,1,108.61,925.53)" fill="#840000" font-size="24" text-anchor="start" letter-spacing="1.2" stroke="#f5f4ef" stroke-width="0.2">LCD<tspan dy="-3.2">_</tspan><tspan dy="3.2">D</tspan>7</text>
<polyline points="89.11,946.54 147.95,946.54" stroke="#009600" stroke-width="2.0" fill="none" stroke-linejoin="round" stroke-linecap="round"/>
<line x1="147.95" y1="946.54" x2="147.95" y2="961.25" stroke="#840000" stroke-width="2.0" stroke-linecap="round"/>
<polygon points="133.25,961.25 162.65,961.25 147.95,975.96" stroke="#840000" stroke-width="2.0" fill="none" stroke-linejoin="round" stroke-linecap="round"/>
<polyline points="89.11,975.96 89.11,1034.8 147.95,1034.8" stroke="#009600" stroke-width="2.0" fill="none" stroke-linejoin="round" stroke-linecap="round"/>
<line x1="93.53" y1="982.07" x2="143.53" y2="982.07" stroke="#840000" stroke-width="4.8" stroke-linecap="round"/>
<line x1="93.53" y1="999.27" x2="143.53" y2="999.27" stroke="#840000" stroke-width="4.8" stroke-linecap="round"/>
<line x1="118.53" y1="946.54" x2="118.53" y2="982.07" stroke="#840000" stroke-width="2.0" stroke-linecap="round"/>
<line x1="118.53" y1="999.27" x2="118.53" y2="1034.8" stroke="#840000" stroke-width="2.0" stroke-linecap="round"/>
<line x1="147.95" y1="1034.8" x2="147.95" y2="1005.38" stroke="#840000" stroke-width="2.0" stroke-linecap="round"/>
<polyline points="139.15,1020.09 147.95,1005.38 156.75,1020.09" stroke="#840000" stroke-width="2.0" fill="none" stroke-linejoin="round" stroke-linecap="round"/>
<text transform="matrix(0.76,0,0,1,164.2,969.41)" fill="#006464" font-size="24" text-anchor="start" letter-spacing="1.2" stroke="#f5f4ef" stroke-width="0.2">GND</text>
<text transform="matrix(0.87,0,0,1,44.2,1003.41)" fill="#006464" font-size="24" text-anchor="start" letter-spacing="1.2" stroke="#f5f4ef" stroke-width="0.2">C43</text>
<text transform="matrix(0.85,0,0,1,31.2,1033.41)" fill="#006464" font-size="24" text-anchor="start" letter-spacing="1.2" stroke="#f5f4ef" stroke-width="0.2">0.1µF</text>
<text transform="matrix(0.92,0,0,1,156.2,1028.41)" fill="#006464" font-size="24" text-anchor="start" letter-spacing="1.2" stroke="#f5f4ef" stroke-width="0.2">+5V</text>
<text transform="matrix(0.89,0,0,1,-39.8,657.41)" fill="#006464" font-size="24" text-anchor="start" letter-spacing="1.2" stroke="#f5f4ef" stroke-width="0.2">Conn<tspan dy="-3.2">_</tspan><tspan dy="3.2">0</tspan>1x10</text>
<text transform="matrix(0.9,0,0,1,13.7,681.41)" fill="#006464" font-size="24" text-anchor="start" letter-spacing="1.2" stroke="#f5f4ef" stroke-width="0.2">J9</text>
<rect x="280.34" y="696.47" width="29.42" height="294.2" stroke="#840000" stroke-width="3.0" fill="#ffffc2"/>
<line x1="309.76" y1="711.18" x2="353.89" y2="711.18" stroke="#840000" stroke-width="2.0" stroke-linecap="round"/>
<text transform="matrix(0.8,0,0,1,332.31,708.59)" fill="#a90000" font-size="24" text-anchor="middle" letter-spacing="1.2" stroke="#f5f4ef" stroke-width="0.2">1</text>
<line x1="295.76" y1="711.18" x2="309.76" y2="711.18" stroke="#840000" stroke-width="4.2" stroke-linecap="butt"/>
<line x1="309.76" y1="740.6" x2="353.89" y2="740.6" stroke="#840000" stroke-width="2.0" stroke-linecap="round"/>
<text transform="matrix(0.8,0,0,1,332.31,738.01)" fill="#a90000" font-size="24" text-anchor="middle" letter-spacing="1.2" stroke="#f5f4ef" stroke-width="0.2">2</text>
<rect x="295.76" y="738.7" width="14" height="3.8" stroke="#840000" stroke-width="1.4" fill="#c8906e"/>
<line x1="309.76" y1="770.02" x2="353.89" y2="770.02" stroke="#840000" stroke-width="2.0" stroke-linecap="round"/>
<text transform="matrix(0.8,0,0,1,332.31,767.43)" fill="#a90000" font-size="24" text-anchor="middle" letter-spacing="1.2" stroke="#f5f4ef" stroke-width="0.2">3</text>
<rect x="295.76" y="768.12" width="14" height="3.8" stroke="#840000" stroke-width="1.4" fill="#c8906e"/>
<line x1="309.76" y1="799.44" x2="353.89" y2="799.44" stroke="#840000" stroke-width="2.0" stroke-linecap="round"/>
<text transform="matrix(0.8,0,0,1,332.31,796.85)" fill="#a90000" font-size="24" text-anchor="middle" letter-spacing="1.2" stroke="#f5f4ef" stroke-width="0.2">4</text>
<rect x="295.76" y="797.54" width="14" height="3.8" stroke="#840000" stroke-width="1.4" fill="#c8906e"/>
<line x1="309.76" y1="828.86" x2="353.89" y2="828.86" stroke="#840000" stroke-width="2.0" stroke-linecap="round"/>
<text transform="matrix(0.8,0,0,1,332.31,826.27)" fill="#a90000" font-size="24" text-anchor="middle" letter-spacing="1.2" stroke="#f5f4ef" stroke-width="0.2">5</text>
<rect x="295.76" y="826.96" width="14" height="3.8" stroke="#840000" stroke-width="1.4" fill="#c8906e"/>
<line x1="309.76" y1="858.28" x2="353.89" y2="858.28" stroke="#840000" stroke-width="2.0" stroke-linecap="round"/>
<text transform="matrix(0.8,0,0,1,332.31,855.69)" fill="#a90000" font-size="24" text-anchor="middle" letter-spacing="1.2" stroke="#f5f4ef" stroke-width="0.2">6</text>
<rect x="295.76" y="856.38" width="14" height="3.8" stroke="#840000" stroke-width="1.4" fill="#c8906e"/>
<line x1="309.76" y1="887.7" x2="353.89" y2="887.7" stroke="#840000" stroke-width="2.0" stroke-linecap="round"/>
<text transform="matrix(0.8,0,0,1,332.31,885.11)" fill="#a90000" font-size="24" text-anchor="middle" letter-spacing="1.2" stroke="#f5f4ef" stroke-width="0.2">7</text>
<rect x="295.76" y="885.8" width="14" height="3.8" stroke="#840000" stroke-width="1.4" fill="#c8906e"/>
<line x1="309.76" y1="917.12" x2="353.89" y2="917.12" stroke="#840000" stroke-width="2.0" stroke-linecap="round"/>
<text transform="matrix(0.8,0,0,1,332.31,914.53)" fill="#a90000" font-size="24" text-anchor="middle" letter-spacing="1.2" stroke="#f5f4ef" stroke-width="0.2">8</text>
<line x1="295.76" y1="917.12" x2="309.76" y2="917.12" stroke="#840000" stroke-width="4.2" stroke-linecap="butt"/>
<line x1="309.76" y1="946.54" x2="353.89" y2="946.54" stroke="#840000" stroke-width="2.0" stroke-linecap="round"/>
<text transform="matrix(0.8,0,0,1,332.31,943.95)" fill="#a90000" font-size="24" text-anchor="middle" letter-spacing="1.2" stroke="#f5f4ef" stroke-width="0.2">9</text>
<rect x="295.76" y="944.64" width="14" height="3.8" stroke="#840000" stroke-width="1.4" fill="#c8906e"/>
<line x1="309.76" y1="975.96" x2="353.89" y2="975.96" stroke="#840000" stroke-width="2.0" stroke-linecap="round"/>
<text transform="matrix(0.8,0,0,1,332.31,973.37)" fill="#a90000" font-size="24" text-anchor="middle" letter-spacing="1.2" stroke="#f5f4ef" stroke-width="0.2">10</text>
<rect x="295.76" y="974.06" width="14" height="3.8" stroke="#840000" stroke-width="1.4" fill="#c8906e"/>
<polygon points="353.89,711.18 366.39,696.68 474.39,696.68 474.39,725.68 366.39,725.68" stroke="#840000" stroke-width="2.0" fill="none" stroke-linejoin="round" stroke-linecap="round"/>
<text transform="matrix(0.76,0,0,1,373.39,719.59)" fill="#840000" font-size="24" text-anchor="start" letter-spacing="1.2" stroke="#f5f4ef" stroke-width="0.2">SD<tspan dy="-3.2">_</tspan><tspan dy="3.2">M</tspan>ISO</text>
<polygon points="353.89,740.6 366.39,726.1 463.89,726.1 463.89,755.1 366.39,755.1" stroke="#840000" stroke-width="2.0" fill="none" stroke-linejoin="round" stroke-linecap="round"/>
<text transform="matrix(0.76,0,0,1,373.39,749.01)" fill="#840000" font-size="24" text-anchor="start" letter-spacing="1.2" stroke="#f5f4ef" stroke-width="0.2">SD<tspan dy="-3.2">_</tspan><tspan dy="3.2">S</tspan>CK</text>
<polygon points="353.89,770.02 366.39,755.52 490.39,755.52 490.39,784.52 366.39,784.52" stroke="#840000" stroke-width="2.0" fill="none" stroke-linejoin="round" stroke-linecap="round"/>
<text transform="matrix(0.76,0,0,1,373.39,778.43)" fill="#840000" font-size="24" text-anchor="start" letter-spacing="1.2" stroke="#f5f4ef" stroke-width="0.2">LCD<tspan dy="-3.2">_</tspan><tspan dy="3.2">E</tspan>NCA</text>
<polygon points="353.89,799.44 366.39,784.94 449.89,784.94 449.89,813.94 366.39,813.94" stroke="#840000" stroke-width="2.0" fill="none" stroke-linejoin="round" stroke-linecap="round"/>
<text transform="matrix(0.75,0,0,1,373.39,807.85)" fill="#840000" font-size="24" text-anchor="start" letter-spacing="1.2" stroke="#f5f4ef" stroke-width="0.2">SD<tspan dy="-3.2">_</tspan><tspan dy="3.2">C</tspan>S</text>
<polygon points="353.89,828.86 366.39,814.36 491.89,814.36 491.89,843.36 366.39,843.36" stroke="#840000" stroke-width="2.0" fill="none" stroke-linejoin="round" stroke-linecap="round"/>
<text transform="matrix(0.77,0,0,1,373.39,837.27)" fill="#840000" font-size="24" text-anchor="start" letter-spacing="1.2" stroke="#f5f4ef" stroke-width="0.2">LCD<tspan dy="-3.2">_</tspan><tspan dy="3.2">E</tspan>NCB</text>
<polygon points="353.89,858.28 366.39,843.78 474.39,843.78 474.39,872.78 366.39,872.78" stroke="#840000" stroke-width="2.0" fill="none" stroke-linejoin="round" stroke-linecap="round"/>
<text transform="matrix(0.76,0,0,1,373.39,866.69)" fill="#840000" font-size="24" text-anchor="start" letter-spacing="1.2" stroke="#f5f4ef" stroke-width="0.2">SD<tspan dy="-3.2">_</tspan><tspan dy="3.2">M</tspan>OSI</text>
<polygon points="353.89,887.7 366.39,873.2 459.89,873.2 459.89,902.2 366.39,902.2" stroke="#840000" stroke-width="2.0" fill="none" stroke-linejoin="round" stroke-linecap="round"/>
<text transform="matrix(0.73,0,0,1,373.39,896.11)" fill="#840000" font-size="24" text-anchor="start" letter-spacing="1.2" stroke="#f5f4ef" stroke-width="0.2">SD<tspan dy="-3.2">_</tspan><tspan dy="3.2">D</tspan>ET</text>
<polygon points="353.89,917.12 366.39,902.62 435.89,902.62 435.89,931.62 366.39,931.62" stroke="#840000" stroke-width="2.0" fill="none" stroke-linejoin="round" stroke-linecap="round"/>
<text transform="matrix(0.72,0,0,1,373.39,925.53)" fill="#840000" font-size="24" text-anchor="start" letter-spacing="1.2" stroke="#f5f4ef" stroke-width="0.2">NRST</text>
<polyline points="353.89,946.54 368.6,946.54" stroke="#009600" stroke-width="2.0" fill="none" stroke-linejoin="round" stroke-linecap="round"/>
<line x1="368.6" y1="946.54" x2="368.6" y2="961.25" stroke="#840000" stroke-width="2.0" stroke-linecap="round"/>
<polygon points="353.9,961.25 383.3,961.25 368.6,975.96" stroke="#840000" stroke-width="2.0" fill="none" stroke-linejoin="round" stroke-linecap="round"/>
<line x1="346.89" y1="968.96" x2="360.89" y2="982.96" stroke="#000084" stroke-width="2" stroke-linecap="round"/>
<line x1="346.89" y1="982.96" x2="360.89" y2="968.96" stroke="#000084" stroke-width="2" stroke-linecap="round"/>
<text transform="matrix(0.76,0,0,1,346.2,1013.41)" fill="#006464" font-size="24" text-anchor="start" letter-spacing="1.2" stroke="#f5f4ef" stroke-width="0.2">GND</text>
<text transform="matrix(0.89,0,0,1,225.2,657.41)" fill="#006464" font-size="24" text-anchor="start" letter-spacing="1.2" stroke="#f5f4ef" stroke-width="0.2">Conn<tspan dy="-3.2">_</tspan><tspan dy="3.2">0</tspan>1x10</text>
<text transform="matrix(0.91,0,0,1,272.2,681.41)" fill="#006464" font-size="24" text-anchor="start" letter-spacing="1.2" stroke="#f5f4ef" stroke-width="0.2">J10</text>
<rect x="562.74" y="770.02" width="23.6" height="58.84" stroke="#840000" stroke-width="3.0" fill="none"/>
<line x1="574.54" y1="755.31" x2="574.54" y2="770.02" stroke="#840000" stroke-width="2.0" stroke-linecap="round"/>
<line x1="574.54" y1="828.86" x2="574.54" y2="843.57" stroke="#840000" stroke-width="2.0" stroke-linecap="round"/>
<polygon points="574.54,843.57 560.04,856.07 560.04,980.57 589.04,980.57 589.04,856.07" stroke="#840000" stroke-width="2.0" fill="none" stroke-linejoin="round" stroke-linecap="round"/>
<text transform="matrix(0,-0.76,1,0,582.95,968.57)" fill="#840000" font-size="24" text-anchor="start" letter-spacing="1.2" stroke="#f5f4ef" stroke-width="0.2">LCD<tspan dy="-3.2">_</tspan><tspan dy="3.2">E</tspan>NCA</text>
<rect x="592.16" y="770.02" width="23.6" height="58.84" stroke="#840000" stroke-width="3.0" fill="none"/>
<line x1="603.96" y1="755.31" x2="603.96" y2="770.02" stroke="#840000" stroke-width="2.0" stroke-linecap="round"/>
<line x1="603.96" y1="828.86" x2="603.96" y2="843.57" stroke="#840000" stroke-width="2.0" stroke-linecap="round"/>
<polygon points="603.96,843.57 589.46,856.07 589.46,982.57 618.46,982.57 618.46,856.07" stroke="#840000" stroke-width="2.0" fill="none" stroke-linejoin="round" stroke-linecap="round"/>
<text transform="matrix(0,-0.78,1,0,612.37,970.57)" fill="#840000" font-size="24" text-anchor="start" letter-spacing="1.2" stroke="#f5f4ef" stroke-width="0.2">LCD<tspan dy="-3.2">_</tspan><tspan dy="3.2">E</tspan>NCB</text>
<rect x="621.58" y="770.02" width="23.6" height="58.84" stroke="#840000" stroke-width="3.0" fill="none"/>
<line x1="633.38" y1="755.31" x2="633.38" y2="770.02" stroke="#840000" stroke-width="2.0" stroke-linecap="round"/>
<line x1="633.38" y1="828.86" x2="633.38" y2="843.57" stroke="#840000" stroke-width="2.0" stroke-linecap="round"/>
<polygon points="633.38,843.57 618.88,856.07 618.88,965.57 647.88,965.57 647.88,856.07" stroke="#840000" stroke-width="2.0" fill="none" stroke-linejoin="round" stroke-linecap="round"/>
<text transform="matrix(0,-0.77,1,0,641.79,953.57)" fill="#840000" font-size="24" text-anchor="start" letter-spacing="1.2" stroke="#f5f4ef" stroke-width="0.2">LCD<tspan dy="-3.2">_</tspan><tspan dy="3.2">B</tspan>TN</text>
<polyline points="574.54,755.31 633.38,755.31" stroke="#009600" stroke-width="2.0" fill="none" stroke-linejoin="round" stroke-linecap="round"/>
<polyline points="603.96,755.31 603.96,740.6" stroke="#009600" stroke-width="2.0" fill="none" stroke-linejoin="round" stroke-linecap="round"/>
<line x1="603.96" y1="740.6" x2="603.96" y2="711.18" stroke="#840000" stroke-width="2.0" stroke-linecap="round"/>
<polyline points="595.16,725.89 603.96,711.18 612.76,725.89" stroke="#840000" stroke-width="2.0" fill="none" stroke-linejoin="round" stroke-linecap="round"/>
<text transform="matrix(0.91,0,0,1,512.2,793.41)" fill="#006464" font-size="24" text-anchor="start" letter-spacing="1.2" stroke="#f5f4ef" stroke-width="0.2">R29</text>
<text transform="matrix(0.91,0,0,1,513.2,822.41)" fill="#006464" font-size="24" text-anchor="start" letter-spacing="1.2" stroke="#f5f4ef" stroke-width="0.2">10K</text>
<text transform="matrix(0.91,0,0,1,589.2,793.41)" fill="#006464" font-size="24" text-anchor="start" letter-spacing="1.2" stroke="#f5f4ef" stroke-width="0.2">R30</text>
<text transform="matrix(0.91,0,0,1,590.2,822.41)" fill="#006464" font-size="24" text-anchor="start" letter-spacing="1.2" stroke="#f5f4ef" stroke-width="0.2">10K</text>
<text transform="matrix(0.91,0,0,1,662.2,793.41)" fill="#006464" font-size="24" text-anchor="start" letter-spacing="1.2" stroke="#f5f4ef" stroke-width="0.2">R31</text>
<text transform="matrix(0.91,0,0,1,663.2,822.41)" fill="#006464" font-size="24" text-anchor="start" letter-spacing="1.2" stroke="#f5f4ef" stroke-width="0.2">10K</text>
<text transform="matrix(0.94,0,0,1,571.2,689.41)" fill="#006464" font-size="24" text-anchor="start" letter-spacing="1.2" stroke="#f5f4ef" stroke-width="0.2">+3.3V</text>
<polygon points="751.06,622.92 1927.86,622.92 1927.86,1049.51 751.06,1049.51" stroke="#0000c2" stroke-width="2.2" fill="none" stroke-linejoin="round" stroke-linecap="round"/>
<text transform="matrix(0.82,0,0,1,770.2,663.06)" fill="#0000c2" font-size="23" text-anchor="start" letter-spacing="1.15" stroke="#f5f4ef" stroke-width="0.2">HEATING</text>
<rect x="868.74" y="770.02" width="29.42" height="58.84" stroke="#840000" stroke-width="3.0" fill="#ffffc2"/>
<line x1="898.16" y1="784.73" x2="942.29" y2="784.73" stroke="#840000" stroke-width="2.0" stroke-linecap="round"/>
<rect x="884.16" y="782.83" width="14" height="3.8" stroke="#840000" stroke-width="1.4" fill="#c8906e"/>
<text transform="matrix(0.8,0,0,1,918.48,782.14)" fill="#a90000" font-size="24" text-anchor="middle" letter-spacing="1.2" stroke="#f5f4ef" stroke-width="0.2">2</text>
<line x1="898.16" y1="814.15" x2="942.29" y2="814.15" stroke="#840000" stroke-width="2.0" stroke-linecap="round"/>
<line x1="884.16" y1="814.15" x2="898.16" y2="814.15" stroke="#840000" stroke-width="4.2" stroke-linecap="butt"/>
<text transform="matrix(0.8,0,0,1,918.48,811.56)" fill="#a90000" font-size="24" text-anchor="middle" letter-spacing="1.2" stroke="#f5f4ef" stroke-width="0.2">1</text>
<polyline points="942.29,784.73 1162.94,784.73" stroke="#009600" stroke-width="2.0" fill="none" stroke-linejoin="round" stroke-linecap="round"/>
<circle cx="1221.3" cy="795.4" r="31.5" stroke="#840000" stroke-width="2.6" fill="none"/>
<line x1="1162.94" y1="784.73" x2="1200.3" y2="784.73" stroke="#840000" stroke-width="2.0" stroke-linecap="round"/>
<circle cx="1200.3" cy="784.73" r="3.8" stroke="none" stroke-width="0" fill="#840000"/>
<circle cx="1241.8" cy="784.73" r="3.8" stroke="none" stroke-width="0" fill="#840000"/>
<polyline points="1241.8,784.73 1280.62,784.73 1280.62,784.73" stroke="#840000" stroke-width="2.0" fill="none" stroke-linejoin="round" stroke-linecap="round"/>
<line x1="1280.62" y1="784.73" x2="1280.62" y2="799.44" stroke="#840000" stroke-width="2.0" stroke-linecap="round"/>
<polygon points="1265.92,799.44 1295.32,799.44 1280.62,814.15" stroke="#840000" stroke-width="2.0" fill="none" stroke-linejoin="round" stroke-linecap="round"/>
<line x1="1200.3" y1="784.73" x2="1200.3" y2="804.7" stroke="#840000" stroke-width="2.0" stroke-linecap="round"/>
<line x1="1241.8" y1="784.73" x2="1241.8" y2="804.7" stroke="#840000" stroke-width="2.0" stroke-linecap="round"/>
<line x1="1193.7" y1="804.7" x2="1207.5" y2="804.7" stroke="#840000" stroke-width="3.5" stroke-linecap="butt"/>
<line x1="1214.5" y1="804.7" x2="1228.6" y2="804.7" stroke="#840000" stroke-width="3.5" stroke-linecap="butt"/>
<line x1="1235.4" y1="804.7" x2="1248.6" y2="804.7" stroke="#840000" stroke-width="3.5" stroke-linecap="butt"/>
<line x1="1198.5" y1="811.4" x2="1244.8" y2="811.4" stroke="#840000" stroke-width="3.5" stroke-linecap="butt"/>
<polyline points="1221.3,811.4 1221.3,872.99 1221.78,872.99" stroke="#840000" stroke-width="2.0" fill="none" stroke-linejoin="round" stroke-linecap="round"/>
<polygon points="1215.7,790.3 1226.4,790.3 1221.3,802" stroke="#840000" stroke-width="1.5" fill="#840000" stroke-linejoin="round" stroke-linecap="round"/>
<polyline points="1221.3,790.3 1221.3,784.73 1241.8,784.73" stroke="#840000" stroke-width="2.0" fill="none" stroke-linejoin="round" stroke-linecap="round"/>
<polyline points="1200.3,784.73 1200.3,776.6 1241.8,776.6 1241.8,784.73" stroke="#840000" stroke-width="1.8" fill="none" stroke-linejoin="round" stroke-linecap="round"/>
<polygon points="1225,770 1225,783 1217,776.6" stroke="#840000" stroke-width="1.6" fill="none" stroke-linejoin="round" stroke-linecap="round"/>
<polyline points="1219,768 1217,770 1217,783 1215,785" stroke="#840000" stroke-width="1.6" fill="none" stroke-linejoin="round" stroke-linecap="round"/>
<text transform="matrix(0.85,0,0,1,1207.2,719.41)" fill="#006464" font-size="24" text-anchor="start" letter-spacing="1.2" stroke="#f5f4ef" stroke-width="0.2">Q6</text>
<text transform="matrix(0.79,0,0,1,1191.2,748.41)" fill="#006464" font-size="24" text-anchor="start" letter-spacing="1.2" stroke="#f5f4ef" stroke-width="0.2">NMOS</text>
<text transform="matrix(0.78,0,0,1,1169.2,781.41)" fill="#006464" font-size="24" text-anchor="start" letter-spacing="1.2" stroke="#f5f4ef" stroke-width="0.2">D</text>
<text transform="matrix(0.89,0,0,1,1257.2,781.41)" fill="#006464" font-size="24" text-anchor="start" letter-spacing="1.2" stroke="#f5f4ef" stroke-width="0.2">S</text>
<text transform="matrix(0.8,0,0,1,1257.2,851.41)" fill="#006464" font-size="24" text-anchor="start" letter-spacing="1.2" stroke="#f5f4ef" stroke-width="0.2">GND</text>
<rect x="1148.23" y="861.19" width="58.84" height="23.6" stroke="#840000" stroke-width="3.0" fill="none"/>
<line x1="1133.52" y1="872.99" x2="1148.23" y2="872.99" stroke="#840000" stroke-width="2.0" stroke-linecap="round"/>
<line x1="1207.07" y1="872.99" x2="1221.78" y2="872.99" stroke="#840000" stroke-width="2.0" stroke-linecap="round"/>
<polyline points="1104.1,872.99 1133.52,872.99" stroke="#009600" stroke-width="2.0" fill="none" stroke-linejoin="round" stroke-linecap="round"/>
<polygon points="1104.1,872.99 1091.6,858.49 974.5,858.49 974.5,887.49 1091.6,887.49" stroke="#840000" stroke-width="2.0" fill="none" stroke-linejoin="round" stroke-linecap="round"/>
<text transform="matrix(0.73,0,0,1,986.5,881.4)" fill="#840000" font-size="24" text-anchor="start" letter-spacing="1.2" stroke="#f5f4ef" stroke-width="0.2">HEAT<tspan dy="-3.2">_</tspan><tspan dy="3.2">B</tspan>ED</text>
<rect x="1107.01" y="887.7" width="23.6" height="58.84" stroke="#840000" stroke-width="3.0" fill="none"/>
<line x1="1118.81" y1="872.99" x2="1118.81" y2="887.7" stroke="#840000" stroke-width="2.0" stroke-linecap="round"/>
<line x1="1118.81" y1="946.54" x2="1118.81" y2="961.25" stroke="#840000" stroke-width="2.0" stroke-linecap="round"/>
<line x1="1118.81" y1="961.25" x2="1118.81" y2="975.96" stroke="#840000" stroke-width="2.0" stroke-linecap="round"/>
<polygon points="1104.11,975.96 1133.51,975.96 1118.81,990.67" stroke="#840000" stroke-width="2.0" fill="none" stroke-linejoin="round" stroke-linecap="round"/>
<text transform="matrix(0.89,0,0,1,1156.2,828.41)" fill="#006464" font-size="24" text-anchor="start" letter-spacing="1.2" stroke="#f5f4ef" stroke-width="0.2">R54</text>
<text transform="matrix(0.87,0,0,1,1149.2,856.41)" fill="#006464" font-size="24" text-anchor="start" letter-spacing="1.2" stroke="#f5f4ef" stroke-width="0.2">100R</text>
<path d="M1202.3,855.5 q3.5,9.5 9.5,8 q6.5,-1.5 5.7,-7 q-0.8,-3.5 -5.3,-3 l-1,3.3" stroke="#006464" stroke-width="1.9" fill="none" stroke-linecap="round" stroke-linejoin="round"/>
<text transform="matrix(0.89,0,0,1,1138.2,913.41)" fill="#006464" font-size="24" text-anchor="start" letter-spacing="1.2" stroke="#f5f4ef" stroke-width="0.2">R53</text>
<text transform="matrix(0.91,0,0,1,1138.2,942.41)" fill="#006464" font-size="24" text-anchor="start" letter-spacing="1.2" stroke="#f5f4ef" stroke-width="0.2">100K</text>
<text transform="matrix(0.78,0,0,1,1096.2,1028.41)" fill="#006464" font-size="24" text-anchor="start" letter-spacing="1.2" stroke="#f5f4ef" stroke-width="0.2">GND</text>
<polygon points="957,740.6 942.5,728.1 942.5,677.1 971.5,677.1 971.5,728.1" stroke="#840000" stroke-width="2.0" fill="none" stroke-linejoin="round" stroke-linecap="round"/>
<text transform="matrix(0,-0.73,1,0,965.41,721.1)" fill="#840000" font-size="24" text-anchor="start" letter-spacing="1.2" stroke="#f5f4ef" stroke-width="0.2">VIN</text>
<polyline points="957,740.6 957,755.31" stroke="#009600" stroke-width="2.0" fill="none" stroke-linejoin="round" stroke-linecap="round"/>
<rect x="971.71" y="743.51" width="58.84" height="23.6" stroke="#840000" stroke-width="3.0" fill="none"/>
<line x1="957" y1="755.31" x2="971.71" y2="755.31" stroke="#840000" stroke-width="2.0" stroke-linecap="round"/>
<line x1="1030.55" y1="755.31" x2="1045.26" y2="755.31" stroke="#840000" stroke-width="2.0" stroke-linecap="round"/>
<line x1="1045.26" y1="755.31" x2="1074.3" y2="755.31" stroke="#840000" stroke-width="2.0" stroke-linecap="round"/>
<polygon points="1074.3,739.81 1103.8,755.31 1074.3,770.81" stroke="#840000" stroke-width="3.0" fill="none" stroke-linejoin="round" stroke-linecap="round"/>
<line x1="1103.8" y1="739.81" x2="1103.8" y2="770.81" stroke="#840000" stroke-width="3.0" stroke-linecap="round"/>
<line x1="1074.3" y1="755.31" x2="1103.8" y2="755.31" stroke="#840000" stroke-width="2.0" stroke-linecap="round"/>
<line x1="1103.8" y1="755.31" x2="1133.52" y2="755.31" stroke="#840000" stroke-width="2.0" stroke-linecap="round"/>
<line x1="1109" y1="747.3" x2="1128" y2="729.3" stroke="#840000" stroke-width="2.0" stroke-linecap="round"/>
<polyline points="1120,729.3 1128,729.3 1128,737" stroke="#840000" stroke-width="2.0" fill="none" stroke-linejoin="round" stroke-linecap="round"/>
<line x1="1124" y1="747.3" x2="1143" y2="729.3" stroke="#840000" stroke-width="2.0" stroke-linecap="round"/>
<polyline points="1135,729.3 1143,729.3 1143,737" stroke="#840000" stroke-width="2.0" fill="none" stroke-linejoin="round" stroke-linecap="round"/>
<polyline points="1133.52,755.31 1133.52,814.15" stroke="#009600" stroke-width="2.0" fill="none" stroke-linejoin="round" stroke-linecap="round"/>
<line x1="1001.13" y1="814.15" x2="1030.7" y2="814.15" stroke="#840000" stroke-width="2.0" stroke-linecap="round"/>
<line x1="1060.1" y1="814.15" x2="1089.39" y2="814.15" stroke="#840000" stroke-width="2.0" stroke-linecap="round"/>
<line x1="1030.7" y1="798.65" x2="1030.7" y2="829.65" stroke="#840000" stroke-width="3.0" stroke-linecap="round"/>
<polygon points="1060.1,798.65 1030.7,814.15 1060.1,829.65" stroke="#840000" stroke-width="3.0" fill="none" stroke-linejoin="round" stroke-linecap="round"/>
<polyline points="942.29,814.15 1001.13,814.15" stroke="#009600" stroke-width="2.0" fill="none" stroke-linejoin="round" stroke-linecap="round"/>
<polyline points="1089.39,814.15 1133.52,814.15" stroke="#009600" stroke-width="2.0" fill="none" stroke-linejoin="round" stroke-linecap="round"/>
<polyline points="957,814.15 957,828.86" stroke="#009600" stroke-width="2.0" fill="none" stroke-linejoin="round" stroke-linecap="round"/>
<polygon points="957,828.86 942.5,841.36 942.5,892.36 971.5,892.36 971.5,841.36" stroke="#840000" stroke-width="2.0" fill="none" stroke-linejoin="round" stroke-linecap="round"/>
<text transform="matrix(0,-0.73,1,0,965.41,880.36)" fill="#840000" font-size="24" text-anchor="start" letter-spacing="1.2" stroke="#f5f4ef" stroke-width="0.2">VIN</text>
<text transform="matrix(0.89,0,0,1,979.2,689.41)" fill="#006464" font-size="24" text-anchor="start" letter-spacing="1.2" stroke="#f5f4ef" stroke-width="0.2">R52</text>
<text transform="matrix(0.86,0,0,1,977.2,718.41)" fill="#006464" font-size="24" text-anchor="start" letter-spacing="1.2" stroke="#f5f4ef" stroke-width="0.2">4.7K</text>
<text transform="matrix(0.89,0,0,1,1085.2,675.41)" fill="#006464" font-size="24" text-anchor="start" letter-spacing="1.2" stroke="#f5f4ef" stroke-width="0.2">D16</text>
<text transform="matrix(0.83,0,0,1,1076.2,704.41)" fill="#006464" font-size="24" text-anchor="start" letter-spacing="1.2" stroke="#f5f4ef" stroke-width="0.2">Green</text>
<text transform="matrix(0.93,0,0,1,1022.2,748.41)" fill="#006464" font-size="24" text-anchor="start" letter-spacing="1.2" stroke="#f5f4ef" stroke-width="0.2">D15</text>
<text transform="matrix(0.83,0,0,1,1037.2,779.41)" fill="#006464" font-size="24" text-anchor="start" letter-spacing="1.2" stroke="#f5f4ef" stroke-width="0.2">D</text>
<text transform="matrix(0.93,0,0,1,859.2,889.41)" fill="#006464" font-size="24" text-anchor="start" letter-spacing="1.2" stroke="#f5f4ef" stroke-width="0.2">J36</text>
<text transform="matrix(0.9,0,0,1,860.2,922.41)" fill="#006464" font-size="24" text-anchor="start" letter-spacing="1.2" stroke="#f5f4ef" stroke-width="0.2">Conn<tspan dy="-3.2">_</tspan><tspan dy="3.2">0</tspan>1x02</text>
<rect x="1383.59" y="770.02" width="29.42" height="58.84" stroke="#840000" stroke-width="3.0" fill="#ffffc2"/>
<line x1="1413.01" y1="784.73" x2="1457.14" y2="784.73" stroke="#840000" stroke-width="2.0" stroke-linecap="round"/>
<rect x="1399.01" y="782.83" width="14" height="3.8" stroke="#840000" stroke-width="1.4" fill="#c8906e"/>
<text transform="matrix(0.8,0,0,1,1433.33,782.14)" fill="#a90000" font-size="24" text-anchor="middle" letter-spacing="1.2" stroke="#f5f4ef" stroke-width="0.2">2</text>
<line x1="1413.01" y1="814.15" x2="1457.14" y2="814.15" stroke="#840000" stroke-width="2.0" stroke-linecap="round"/>
<line x1="1399.01" y1="814.15" x2="1413.01" y2="814.15" stroke="#840000" stroke-width="4.2" stroke-linecap="butt"/>
<text transform="matrix(0.8,0,0,1,1433.33,811.56)" fill="#a90000" font-size="24" text-anchor="middle" letter-spacing="1.2" stroke="#f5f4ef" stroke-width="0.2">1</text>
<polyline points="1457.14,784.73 1677.79,784.73" stroke="#009600" stroke-width="2.0" fill="none" stroke-linejoin="round" stroke-linecap="round"/>
<circle cx="1736.15" cy="795.4" r="31.5" stroke="#840000" stroke-width="2.6" fill="none"/>
<line x1="1677.79" y1="784.73" x2="1715.15" y2="784.73" stroke="#840000" stroke-width="2.0" stroke-linecap="round"/>
<circle cx="1715.15" cy="784.73" r="3.8" stroke="none" stroke-width="0" fill="#840000"/>
<circle cx="1756.65" cy="784.73" r="3.8" stroke="none" stroke-width="0" fill="#840000"/>
<polyline points="1756.65,784.73 1795.47,784.73 1795.47,784.73" stroke="#840000" stroke-width="2.0" fill="none" stroke-linejoin="round" stroke-linecap="round"/>
<line x1="1795.47" y1="784.73" x2="1795.47" y2="799.44" stroke="#840000" stroke-width="2.0" stroke-linecap="round"/>
<polygon points="1780.77,799.44 1810.17,799.44 1795.47,814.15" stroke="#840000" stroke-width="2.0" fill="none" stroke-linejoin="round" stroke-linecap="round"/>
<line x1="1715.15" y1="784.73" x2="1715.15" y2="804.7" stroke="#840000" stroke-width="2.0" stroke-linecap="round"/>
<line x1="1756.65" y1="784.73" x2="1756.65" y2="804.7" stroke="#840000" stroke-width="2.0" stroke-linecap="round"/>
<line x1="1708.55" y1="804.7" x2="1722.35" y2="804.7" stroke="#840000" stroke-width="3.5" stroke-linecap="butt"/>
<line x1="1729.35" y1="804.7" x2="1743.45" y2="804.7" stroke="#840000" stroke-width="3.5" stroke-linecap="butt"/>
<line x1="1750.25" y1="804.7" x2="1763.45" y2="804.7" stroke="#840000" stroke-width="3.5" stroke-linecap="butt"/>
<line x1="1713.35" y1="811.4" x2="1759.65" y2="811.4" stroke="#840000" stroke-width="3.5" stroke-linecap="butt"/>
<polyline points="1736.15,811.4 1736.15,872.99 1736.63,872.99" stroke="#840000" stroke-width="2.0" fill="none" stroke-linejoin="round" stroke-linecap="round"/>
<polygon points="1730.55,790.3 1741.25,790.3 1736.15,802" stroke="#840000" stroke-width="1.5" fill="#840000" stroke-linejoin="round" stroke-linecap="round"/>
<polyline points="1736.15,790.3 1736.15,784.73 1756.65,784.73" stroke="#840000" stroke-width="2.0" fill="none" stroke-linejoin="round" stroke-linecap="round"/>
<polyline points="1715.15,784.73 1715.15,776.6 1756.65,776.6 1756.65,784.73" stroke="#840000" stroke-width="1.8" fill="none" stroke-linejoin="round" stroke-linecap="round"/>
<polygon points="1739.85,770 1739.85,783 1731.85,776.6" stroke="#840000" stroke-width="1.6" fill="none" stroke-linejoin="round" stroke-linecap="round"/>
<polyline points="1733.85,768 1731.85,770 1731.85,783 1729.85,785" stroke="#840000" stroke-width="1.6" fill="none" stroke-linejoin="round" stroke-linecap="round"/>
<text transform="matrix(0.85,0,0,1,1722.05,719.41)" fill="#006464" font-size="24" text-anchor="start" letter-spacing="1.2" stroke="#f5f4ef" stroke-width="0.2">Q5</text>
<text transform="matrix(0.79,0,0,1,1706.05,748.41)" fill="#006464" font-size="24" text-anchor="start" letter-spacing="1.2" stroke="#f5f4ef" stroke-width="0.2">NMOS</text>
<text transform="matrix(0.78,0,0,1,1684.05,781.41)" fill="#006464" font-size="24" text-anchor="start" letter-spacing="1.2" stroke="#f5f4ef" stroke-width="0.2">D</text>
<text transform="matrix(0.89,0,0,1,1772.05,781.41)" fill="#006464" font-size="24" text-anchor="start" letter-spacing="1.2" stroke="#f5f4ef" stroke-width="0.2">S</text>
<text transform="matrix(0.8,0,0,1,1772.05,851.41)" fill="#006464" font-size="24" text-anchor="start" letter-spacing="1.2" stroke="#f5f4ef" stroke-width="0.2">GND</text>
<rect x="1663.08" y="861.19" width="58.84" height="23.6" stroke="#840000" stroke-width="3.0" fill="none"/>
<line x1="1648.37" y1="872.99" x2="1663.08" y2="872.99" stroke="#840000" stroke-width="2.0" stroke-linecap="round"/>
<line x1="1721.92" y1="872.99" x2="1736.63" y2="872.99" stroke="#840000" stroke-width="2.0" stroke-linecap="round"/>
<polyline points="1618.95,872.99 1648.37,872.99" stroke="#009600" stroke-width="2.0" fill="none" stroke-linejoin="round" stroke-linecap="round"/>
<polygon points="1618.95,872.99 1606.45,858.49 1522.95,858.49 1522.95,887.49 1606.45,887.49" stroke="#840000" stroke-width="2.0" fill="none" stroke-linejoin="round" stroke-linecap="round"/>
<text transform="matrix(0.79,0,0,1,1534.95,881.4)" fill="#840000" font-size="24" text-anchor="start" letter-spacing="1.2" stroke="#f5f4ef" stroke-width="0.2">HEAT1</text>
<rect x="1621.86" y="887.7" width="23.6" height="58.84" stroke="#840000" stroke-width="3.0" fill="none"/>
<line x1="1633.66" y1="872.99" x2="1633.66" y2="887.7" stroke="#840000" stroke-width="2.0" stroke-linecap="round"/>
<line x1="1633.66" y1="946.54" x2="1633.66" y2="961.25" stroke="#840000" stroke-width="2.0" stroke-linecap="round"/>
<line x1="1633.66" y1="961.25" x2="1633.66" y2="975.96" stroke="#840000" stroke-width="2.0" stroke-linecap="round"/>
<polygon points="1618.96,975.96 1648.36,975.96 1633.66,990.67" stroke="#840000" stroke-width="2.0" fill="none" stroke-linejoin="round" stroke-linecap="round"/>
<text transform="matrix(0.89,0,0,1,1671.05,828.41)" fill="#006464" font-size="24" text-anchor="start" letter-spacing="1.2" stroke="#f5f4ef" stroke-width="0.2">R51</text>
<text transform="matrix(0.87,0,0,1,1664.05,856.41)" fill="#006464" font-size="24" text-anchor="start" letter-spacing="1.2" stroke="#f5f4ef" stroke-width="0.2">100R</text>
<path d="M1717.15,855.5 q3.5,9.5 9.5,8 q6.5,-1.5 5.7,-7 q-0.8,-3.5 -5.3,-3 l-1,3.3" stroke="#006464" stroke-width="1.9" fill="none" stroke-linecap="round" stroke-linejoin="round"/>
<text transform="matrix(0.89,0,0,1,1653.05,913.41)" fill="#006464" font-size="24" text-anchor="start" letter-spacing="1.2" stroke="#f5f4ef" stroke-width="0.2">R50</text>
<text transform="matrix(0.91,0,0,1,1653.05,942.41)" fill="#006464" font-size="24" text-anchor="start" letter-spacing="1.2" stroke="#f5f4ef" stroke-width="0.2">100K</text>
<text transform="matrix(0.78,0,0,1,1611.05,1028.41)" fill="#006464" font-size="24" text-anchor="start" letter-spacing="1.2" stroke="#f5f4ef" stroke-width="0.2">GND</text>
<polygon points="1471.85,740.6 1457.35,728.1 1457.35,677.1 1486.35,677.1 1486.35,728.1" stroke="#840000" stroke-width="2.0" fill="none" stroke-linejoin="round" stroke-linecap="round"/>
<text transform="matrix(0,-0.73,1,0,1480.26,721.1)" fill="#840000" font-size="24" text-anchor="start" letter-spacing="1.2" stroke="#f5f4ef" stroke-width="0.2">VIN</text>
<polyline points="1471.85,740.6 1471.85,755.31" stroke="#009600" stroke-width="2.0" fill="none" stroke-linejoin="round" stroke-linecap="round"/>
<rect x="1486.56" y="743.51" width="58.84" height="23.6" stroke="#840000" stroke-width="3.0" fill="none"/>
<line x1="1471.85" y1="755.31" x2="1486.56" y2="755.31" stroke="#840000" stroke-width="2.0" stroke-linecap="round"/>
<line x1="1545.4" y1="755.31" x2="1560.11" y2="755.31" stroke="#840000" stroke-width="2.0" stroke-linecap="round"/>
<line x1="1560.11" y1="755.31" x2="1589.15" y2="755.31" stroke="#840000" stroke-width="2.0" stroke-linecap="round"/>
<polygon points="1589.15,739.81 1618.65,755.31 1589.15,770.81" stroke="#840000" stroke-width="3.0" fill="none" stroke-linejoin="round" stroke-linecap="round"/>
<line x1="1618.65" y1="739.81" x2="1618.65" y2="770.81" stroke="#840000" stroke-width="3.0" stroke-linecap="round"/>
<line x1="1589.15" y1="755.31" x2="1618.65" y2="755.31" stroke="#840000" stroke-width="2.0" stroke-linecap="round"/>
<line x1="1618.65" y1="755.31" x2="1648.37" y2="755.31" stroke="#840000" stroke-width="2.0" stroke-linecap="round"/>
<line x1="1623.85" y1="747.3" x2="1642.85" y2="729.3" stroke="#840000" stroke-width="2.0" stroke-linecap="round"/>
<polyline points="1634.85,729.3 1642.85,729.3 1642.85,737" stroke="#840000" stroke-width="2.0" fill="none" stroke-linejoin="round" stroke-linecap="round"/>
<line x1="1638.85" y1="747.3" x2="1657.85" y2="729.3" stroke="#840000" stroke-width="2.0" stroke-linecap="round"/>
<polyline points="1649.85,729.3 1657.85,729.3 1657.85,737" stroke="#840000" stroke-width="2.0" fill="none" stroke-linejoin="round" stroke-linecap="round"/>
<polyline points="1648.37,755.31 1648.37,814.15" stroke="#009600" stroke-width="2.0" fill="none" stroke-linejoin="round" stroke-linecap="round"/>
<line x1="1515.98" y1="814.15" x2="1545.55" y2="814.15" stroke="#840000" stroke-width="2.0" stroke-linecap="round"/>
<line x1="1574.95" y1="814.15" x2="1604.24" y2="814.15" stroke="#840000" stroke-width="2.0" stroke-linecap="round"/>
<line x1="1545.55" y1="798.65" x2="1545.55" y2="829.65" stroke="#840000" stroke-width="3.0" stroke-linecap="round"/>
<polygon points="1574.95,798.65 1545.55,814.15 1574.95,829.65" stroke="#840000" stroke-width="3.0" fill="none" stroke-linejoin="round" stroke-linecap="round"/>
<polyline points="1457.14,814.15 1515.98,814.15" stroke="#009600" stroke-width="2.0" fill="none" stroke-linejoin="round" stroke-linecap="round"/>
<polyline points="1604.24,814.15 1648.37,814.15" stroke="#009600" stroke-width="2.0" fill="none" stroke-linejoin="round" stroke-linecap="round"/>
<polyline points="1471.85,814.15 1471.85,828.86" stroke="#009600" stroke-width="2.0" fill="none" stroke-linejoin="round" stroke-linecap="round"/>
<polygon points="1471.85,828.86 1457.35,841.36 1457.35,892.36 1486.35,892.36 1486.35,841.36" stroke="#840000" stroke-width="2.0" fill="none" stroke-linejoin="round" stroke-linecap="round"/>
<text transform="matrix(0,-0.73,1,0,1480.26,880.36)" fill="#840000" font-size="24" text-anchor="start" letter-spacing="1.2" stroke="#f5f4ef" stroke-width="0.2">VIN</text>
<text transform="matrix(0.89,0,0,1,1494.05,689.41)" fill="#006464" font-size="24" text-anchor="start" letter-spacing="1.2" stroke="#f5f4ef" stroke-width="0.2">R49</text>
<text transform="matrix(0.86,0,0,1,1492.05,718.41)" fill="#006464" font-size="24" text-anchor="start" letter-spacing="1.2" stroke="#f5f4ef" stroke-width="0.2">4.7K</text>
<text transform="matrix(0.89,0,0,1,1600.05,675.41)" fill="#006464" font-size="24" text-anchor="start" letter-spacing="1.2" stroke="#f5f4ef" stroke-width="0.2">D14</text>
<text transform="matrix(0.83,0,0,1,1591.05,704.41)" fill="#006464" font-size="24" text-anchor="start" letter-spacing="1.2" stroke="#f5f4ef" stroke-width="0.2">Green</text>
<text transform="matrix(0.93,0,0,1,1537.05,748.41)" fill="#006464" font-size="24" text-anchor="start" letter-spacing="1.2" stroke="#f5f4ef" stroke-width="0.2">D13</text>
<text transform="matrix(0.83,0,0,1,1552.05,779.41)" fill="#006464" font-size="24" text-anchor="start" letter-spacing="1.2" stroke="#f5f4ef" stroke-width="0.2">D</text>
<text transform="matrix(0.93,0,0,1,1374.05,889.41)" fill="#006464" font-size="24" text-anchor="start" letter-spacing="1.2" stroke="#f5f4ef" stroke-width="0.2">J35</text>
<text transform="matrix(0.9,0,0,1,1375.05,922.41)" fill="#006464" font-size="24" text-anchor="start" letter-spacing="1.2" stroke="#f5f4ef" stroke-width="0.2">Conn<tspan dy="-3.2">_</tspan><tspan dy="3.2">0</tspan>1x02</text>
<polyline points="20,1078.93 383.31,1078.93 383.31,1400" stroke="#0000c2" stroke-width="2.2" fill="none" stroke-linejoin="round" stroke-linecap="round"/>
<rect x="-116.83" y="1226.03" width="29.42" height="58.84" stroke="#840000" stroke-width="3.0" fill="#ffffc2"/>
<line x1="-87.41" y1="1240.74" x2="-43.28" y2="1240.74" stroke="#840000" stroke-width="2.0" stroke-linecap="round"/>
<rect x="-101.41" y="1238.84" width="14" height="3.8" stroke="#840000" stroke-width="1.4" fill="#c8906e"/>
<text transform="matrix(0.8,0,0,1,-67.09,1238.15)" fill="#a90000" font-size="24" text-anchor="middle" letter-spacing="1.2" stroke="#f5f4ef" stroke-width="0.2">2</text>
<line x1="-87.41" y1="1270.16" x2="-43.28" y2="1270.16" stroke="#840000" stroke-width="2.0" stroke-linecap="round"/>
<line x1="-101.41" y1="1270.16" x2="-87.41" y2="1270.16" stroke="#840000" stroke-width="4.2" stroke-linecap="butt"/>
<text transform="matrix(0.8,0,0,1,-67.09,1267.57)" fill="#a90000" font-size="24" text-anchor="middle" letter-spacing="1.2" stroke="#f5f4ef" stroke-width="0.2">1</text>
<polyline points="-43.28,1240.74 177.37,1240.74" stroke="#009600" stroke-width="2.0" fill="none" stroke-linejoin="round" stroke-linecap="round"/>
<circle cx="235.73" cy="1251.41" r="31.5" stroke="#840000" stroke-width="2.6" fill="none"/>
<line x1="177.37" y1="1240.74" x2="214.73" y2="1240.74" stroke="#840000" stroke-width="2.0" stroke-linecap="round"/>
<circle cx="214.73" cy="1240.74" r="3.8" stroke="none" stroke-width="0" fill="#840000"/>
<circle cx="256.23" cy="1240.74" r="3.8" stroke="none" stroke-width="0" fill="#840000"/>
<polyline points="256.23,1240.74 295.05,1240.74 295.05,1240.74" stroke="#840000" stroke-width="2.0" fill="none" stroke-linejoin="round" stroke-linecap="round"/>
<line x1="295.05" y1="1240.74" x2="295.05" y2="1255.45" stroke="#840000" stroke-width="2.0" stroke-linecap="round"/>
<polygon points="280.35,1255.45 309.75,1255.45 295.05,1270.16" stroke="#840000" stroke-width="2.0" fill="none" stroke-linejoin="round" stroke-linecap="round"/>
<line x1="214.73" y1="1240.74" x2="214.73" y2="1260.71" stroke="#840000" stroke-width="2.0" stroke-linecap="round"/>
<line x1="256.23" y1="1240.74" x2="256.23" y2="1260.71" stroke="#840000" stroke-width="2.0" stroke-linecap="round"/>
<line x1="208.13" y1="1260.71" x2="221.93" y2="1260.71" stroke="#840000" stroke-width="3.5" stroke-linecap="butt"/>
<line x1="228.93" y1="1260.71" x2="243.03" y2="1260.71" stroke="#840000" stroke-width="3.5" stroke-linecap="butt"/>
<line x1="249.83" y1="1260.71" x2="263.03" y2="1260.71" stroke="#840000" stroke-width="3.5" stroke-linecap="butt"/>
<line x1="212.93" y1="1267.41" x2="259.23" y2="1267.41" stroke="#840000" stroke-width="3.5" stroke-linecap="butt"/>
<polyline points="235.73,1267.41 235.73,1329 236.21,1329" stroke="#840000" stroke-width="2.0" fill="none" stroke-linejoin="round" stroke-linecap="round"/>
<polygon points="230.13,1246.31 240.83,1246.31 235.73,1258.01" stroke="#840000" stroke-width="1.5" fill="#840000" stroke-linejoin="round" stroke-linecap="round"/>
<polyline points="235.73,1246.31 235.73,1240.74 256.23,1240.74" stroke="#840000" stroke-width="2.0" fill="none" stroke-linejoin="round" stroke-linecap="round"/>
<polyline points="214.73,1240.74 214.73,1232.61 256.23,1232.61 256.23,1240.74" stroke="#840000" stroke-width="1.8" fill="none" stroke-linejoin="round" stroke-linecap="round"/>
<polygon points="239.43,1226.01 239.43,1239.01 231.43,1232.61" stroke="#840000" stroke-width="1.6" fill="none" stroke-linejoin="round" stroke-linecap="round"/>
<polyline points="233.43,1224.01 231.43,1226.01 231.43,1239.01 229.43,1241.01" stroke="#840000" stroke-width="1.6" fill="none" stroke-linejoin="round" stroke-linecap="round"/>
<text transform="matrix(0.85,0,0,1,221.63,1175.42)" fill="#006464" font-size="24" text-anchor="start" letter-spacing="1.2" stroke="#f5f4ef" stroke-width="0.2">Q4</text>
<text transform="matrix(0.79,0,0,1,205.63,1204.42)" fill="#006464" font-size="24" text-anchor="start" letter-spacing="1.2" stroke="#f5f4ef" stroke-width="0.2">NMOS</text>
<text transform="matrix(0.78,0,0,1,183.63,1237.42)" fill="#006464" font-size="24" text-anchor="start" letter-spacing="1.2" stroke="#f5f4ef" stroke-width="0.2">D</text>
<text transform="matrix(0.89,0,0,1,271.63,1237.42)" fill="#006464" font-size="24" text-anchor="start" letter-spacing="1.2" stroke="#f5f4ef" stroke-width="0.2">S</text>
<text transform="matrix(0.8,0,0,1,271.63,1307.42)" fill="#006464" font-size="24" text-anchor="start" letter-spacing="1.2" stroke="#f5f4ef" stroke-width="0.2">GND</text>
<rect x="162.66" y="1317.2" width="58.84" height="23.6" stroke="#840000" stroke-width="3.0" fill="none"/>
<line x1="147.95" y1="1329" x2="162.66" y2="1329" stroke="#840000" stroke-width="2.0" stroke-linecap="round"/>
<line x1="221.5" y1="1329" x2="236.21" y2="1329" stroke="#840000" stroke-width="2.0" stroke-linecap="round"/>
<polyline points="118.53,1329 147.95,1329" stroke="#009600" stroke-width="2.0" fill="none" stroke-linejoin="round" stroke-linecap="round"/>
<polygon points="118.53,1329 106.03,1314.5 34.53,1314.5 34.53,1343.5 106.03,1343.5" stroke="#840000" stroke-width="2.0" fill="none" stroke-linejoin="round" stroke-linecap="round"/>
<text transform="matrix(0.81,0,0,1,46.53,1337.41)" fill="#840000" font-size="24" text-anchor="start" letter-spacing="1.2" stroke="#f5f4ef" stroke-width="0.2">FAN3</text>
<rect x="121.44" y="1343.71" width="23.6" height="58.84" stroke="#840000" stroke-width="3.0" fill="none"/>
<line x1="133.24" y1="1329" x2="133.24" y2="1343.71" stroke="#840000" stroke-width="2.0" stroke-linecap="round"/>
<line x1="133.24" y1="1402.55" x2="133.24" y2="1417.26" stroke="#840000" stroke-width="2.0" stroke-linecap="round"/>
<line x1="133.24" y1="1417.26" x2="133.24" y2="1431.97" stroke="#840000" stroke-width="2.0" stroke-linecap="round"/>
<polygon points="118.54,1431.97 147.94,1431.97 133.24,1446.68" stroke="#840000" stroke-width="2.0" fill="none" stroke-linejoin="round" stroke-linecap="round"/>
<text transform="matrix(0.89,0,0,1,170.63,1284.42)" fill="#006464" font-size="24" text-anchor="start" letter-spacing="1.2" stroke="#f5f4ef" stroke-width="0.2">R40</text>
<text transform="matrix(0.87,0,0,1,163.63,1312.42)" fill="#006464" font-size="24" text-anchor="start" letter-spacing="1.2" stroke="#f5f4ef" stroke-width="0.2">100R</text>
<path d="M216.73,1311.51 q3.5,9.5 9.5,8 q6.5,-1.5 5.7,-7 q-0.8,-3.5 -5.3,-3 l-1,3.3" stroke="#006464" stroke-width="1.9" fill="none" stroke-linecap="round" stroke-linejoin="round"/>
<text transform="matrix(0.89,0,0,1,152.63,1369.42)" fill="#006464" font-size="24" text-anchor="start" letter-spacing="1.2" stroke="#f5f4ef" stroke-width="0.2">R39</text>
<text transform="matrix(0.91,0,0,1,152.63,1398.42)" fill="#006464" font-size="24" text-anchor="start" letter-spacing="1.2" stroke="#f5f4ef" stroke-width="0.2">100K</text>
<text transform="matrix(0.78,0,0,1,110.63,1484.42)" fill="#006464" font-size="24" text-anchor="start" letter-spacing="1.2" stroke="#f5f4ef" stroke-width="0.2">GND</text>
<polygon points="-28.57,1196.61 -43.07,1184.11 -43.07,1133.11 -14.07,1133.11 -14.07,1184.11" stroke="#840000" stroke-width="2.0" fill="none" stroke-linejoin="round" stroke-linecap="round"/>
<text transform="matrix(0,-0.73,1,0,-20.16,1177.11)" fill="#840000" font-size="24" text-anchor="start" letter-spacing="1.2" stroke="#f5f4ef" stroke-width="0.2">VIN</text>
<polyline points="-28.57,1196.61 -28.57,1211.32" stroke="#009600" stroke-width="2.0" fill="none" stroke-linejoin="round" stroke-linecap="round"/>
<rect x="-13.86" y="1199.52" width="58.84" height="23.6" stroke="#840000" stroke-width="3.0" fill="none"/>
<line x1="-28.57" y1="1211.32" x2="-13.86" y2="1211.32" stroke="#840000" stroke-width="2.0" stroke-linecap="round"/>
<line x1="44.98" y1="1211.32" x2="59.69" y2="1211.32" stroke="#840000" stroke-width="2.0" stroke-linecap="round"/>
<line x1="59.69" y1="1211.32" x2="88.73" y2="1211.32" stroke="#840000" stroke-width="2.0" stroke-linecap="round"/>
<polygon points="88.73,1195.82 118.23,1211.32 88.73,1226.82" stroke="#840000" stroke-width="3.0" fill="none" stroke-linejoin="round" stroke-linecap="round"/>
<line x1="118.23" y1="1195.82" x2="118.23" y2="1226.82" stroke="#840000" stroke-width="3.0" stroke-linecap="round"/>
<line x1="88.73" y1="1211.32" x2="118.23" y2="1211.32" stroke="#840000" stroke-width="2.0" stroke-linecap="round"/>
<line x1="118.23" y1="1211.32" x2="147.95" y2="1211.32" stroke="#840000" stroke-width="2.0" stroke-linecap="round"/>
<line x1="123.43" y1="1203.31" x2="142.43" y2="1185.31" stroke="#840000" stroke-width="2.0" stroke-linecap="round"/>
<polyline points="134.43,1185.31 142.43,1185.31 142.43,1193.01" stroke="#840000" stroke-width="2.0" fill="none" stroke-linejoin="round" stroke-linecap="round"/>
<line x1="138.43" y1="1203.31" x2="157.43" y2="1185.31" stroke="#840000" stroke-width="2.0" stroke-linecap="round"/>
<polyline points="149.43,1185.31 157.43,1185.31 157.43,1193.01" stroke="#840000" stroke-width="2.0" fill="none" stroke-linejoin="round" stroke-linecap="round"/>
<polyline points="147.95,1211.32 147.95,1270.16" stroke="#009600" stroke-width="2.0" fill="none" stroke-linejoin="round" stroke-linecap="round"/>
<line x1="15.56" y1="1270.16" x2="45.13" y2="1270.16" stroke="#840000" stroke-width="2.0" stroke-linecap="round"/>
<line x1="74.53" y1="1270.16" x2="103.82" y2="1270.16" stroke="#840000" stroke-width="2.0" stroke-linecap="round"/>
<line x1="45.13" y1="1254.66" x2="45.13" y2="1285.66" stroke="#840000" stroke-width="3.0" stroke-linecap="round"/>
<polygon points="74.53,1254.66 45.13,1270.16 74.53,1285.66" stroke="#840000" stroke-width="3.0" fill="none" stroke-linejoin="round" stroke-linecap="round"/>
<polyline points="-43.28,1270.16 15.56,1270.16" stroke="#009600" stroke-width="2.0" fill="none" stroke-linejoin="round" stroke-linecap="round"/>
<polyline points="103.82,1270.16 147.95,1270.16" stroke="#009600" stroke-width="2.0" fill="none" stroke-linejoin="round" stroke-linecap="round"/>
<polyline points="-28.57,1270.16 -28.57,1284.87" stroke="#009600" stroke-width="2.0" fill="none" stroke-linejoin="round" stroke-linecap="round"/>
<polygon points="-28.57,1284.87 -43.07,1297.37 -43.07,1348.37 -14.07,1348.37 -14.07,1297.37" stroke="#840000" stroke-width="2.0" fill="none" stroke-linejoin="round" stroke-linecap="round"/>
<text transform="matrix(0,-0.73,1,0,-20.16,1336.37)" fill="#840000" font-size="24" text-anchor="start" letter-spacing="1.2" stroke="#f5f4ef" stroke-width="0.2">VIN</text>
<text transform="matrix(0.89,0,0,1,-6.37,1145.42)" fill="#006464" font-size="24" text-anchor="start" letter-spacing="1.2" stroke="#f5f4ef" stroke-width="0.2">R43</text>
<text transform="matrix(0.86,0,0,1,-8.37,1174.42)" fill="#006464" font-size="24" text-anchor="start" letter-spacing="1.2" stroke="#f5f4ef" stroke-width="0.2">4.7K</text>
<text transform="matrix(0.89,0,0,1,99.63,1131.42)" fill="#006464" font-size="24" text-anchor="start" letter-spacing="1.2" stroke="#f5f4ef" stroke-width="0.2">D12</text>
<text transform="matrix(0.83,0,0,1,90.63,1160.42)" fill="#006464" font-size="24" text-anchor="start" letter-spacing="1.2" stroke="#f5f4ef" stroke-width="0.2">Green</text>
<text transform="matrix(0.97,0,0,1,36.63,1204.42)" fill="#006464" font-size="24" text-anchor="start" letter-spacing="1.2" stroke="#f5f4ef" stroke-width="0.2">D11</text>
<text transform="matrix(0.83,0,0,1,51.63,1235.42)" fill="#006464" font-size="24" text-anchor="start" letter-spacing="1.2" stroke="#f5f4ef" stroke-width="0.2">D</text>
<text transform="matrix(0.93,0,0,1,-126.37,1345.42)" fill="#006464" font-size="24" text-anchor="start" letter-spacing="1.2" stroke="#f5f4ef" stroke-width="0.2">J33</text>
<text transform="matrix(0.9,0,0,1,-125.37,1378.42)" fill="#006464" font-size="24" text-anchor="start" letter-spacing="1.2" stroke="#f5f4ef" stroke-width="0.2">Conn<tspan dy="-3.2">_</tspan><tspan dy="3.2">0</tspan>1x02</text>
<circle cx="942.29" cy="490.53" r="5.5" stroke="none" stroke-width="0" fill="#009600"/>
<circle cx="574.54" cy="255.17" r="5.5" stroke="none" stroke-width="0" fill="#009600"/>
<circle cx="2236.77" cy="-318.52" r="5.5" stroke="none" stroke-width="0" fill="#009600"/>
<circle cx="2354.45" cy="122.78" r="5.5" stroke="none" stroke-width="0" fill="#009600"/>
<circle cx="2354.45" cy="152.2" r="5.5" stroke="none" stroke-width="0" fill="#009600"/>
<circle cx="2236.77" cy="431.69" r="5.5" stroke="none" stroke-width="0" fill="#009600"/>
<circle cx="2354.45" cy="872.99" r="5.5" stroke="none" stroke-width="0" fill="#009600"/>
<circle cx="2354.45" cy="902.41" r="5.5" stroke="none" stroke-width="0" fill="#009600"/>
<circle cx="2236.77" cy="1181.9" r="5.5" stroke="none" stroke-width="0" fill="#009600"/>
<circle cx="2354.45" cy="1623.2" r="5.5" stroke="none" stroke-width="0" fill="#009600"/>
<circle cx="2354.45" cy="1652.62" r="5.5" stroke="none" stroke-width="0" fill="#009600"/>
<circle cx="118.53" cy="946.54" r="5.5" stroke="none" stroke-width="0" fill="#009600"/>
<circle cx="118.53" cy="1034.8" r="5.5" stroke="none" stroke-width="0" fill="#009600"/>
<circle cx="603.96" cy="755.31" r="5.5" stroke="none" stroke-width="0" fill="#009600"/>
<circle cx="1133.52" cy="784.73" r="5.5" stroke="none" stroke-width="0" fill="#009600"/>
<circle cx="1118.81" cy="872.99" r="5.5" stroke="none" stroke-width="0" fill="#009600"/>
<circle cx="957" cy="814.15" r="5.5" stroke="none" stroke-width="0" fill="#009600"/>
<circle cx="1648.37" cy="784.73" r="5.5" stroke="none" stroke-width="0" fill="#009600"/>
<circle cx="1633.66" cy="872.99" r="5.5" stroke="none" stroke-width="0" fill="#009600"/>
<circle cx="1471.85" cy="814.15" r="5.5" stroke="none" stroke-width="0" fill="#009600"/>
<circle cx="147.95" cy="1240.74" r="5.5" stroke="none" stroke-width="0" fill="#009600"/>
<circle cx="133.24" cy="1329" r="5.5" stroke="none" stroke-width="0" fill="#009600"/>
<circle cx="-28.57" cy="1270.16" r="5.5" stroke="none" stroke-width="0" fill="#009600"/>
</g>
<rect x="2427" y="1303" width="1" height="39" fill="#8a8a6a"/>
<circle cx="6" cy="101" r="1.6" fill="#444"/><circle cx="6" cy="107" r="1.6" fill="#444"/><circle cx="6" cy="113" r="1.6" fill="#444"/><circle cx="6" cy="119" r="1.6" fill="#444"/><circle cx="12" cy="101" r="1.6" fill="#444"/><circle cx="12" cy="107" r="1.6" fill="#444"/><circle cx="12" cy="113" r="1.6" fill="#444"/><circle cx="12" cy="119" r="1.6" fill="#444"/><circle cx="18" cy="101" r="1.6" fill="#444"/><circle cx="18" cy="107" r="1.6" fill="#444"/><circle cx="18" cy="113" r="1.6" fill="#444"/><circle cx="18" cy="119" r="1.6" fill="#444"/><circle cx="24" cy="101" r="1.6" fill="#444"/><circle cx="24" cy="107" r="1.6" fill="#444"/><circle cx="24" cy="113" r="1.6" fill="#444"/><circle cx="24" cy="119" r="1.6" fill="#444"/><rect x="1.5" y="128.5" width="28" height="28.5" fill="#f9cfc2" stroke="#f06a2e" stroke-width="1"/><circle cx="6" cy="134" r="1.5" fill="#555"/><circle cx="12" cy="134" r="1.5" fill="#555"/><circle cx="18" cy="134" r="1.5" fill="#555"/><circle cx="6" cy="140" r="1.5" fill="#555"/><circle cx="12" cy="140" r="1.5" fill="#555"/><circle cx="6" cy="146" r="1.5" fill="#555"/><path d="M3.5,154 l21,-21" stroke="#555" stroke-width="1.3"/><rect x="18.5" y="144" width="1.6" height="1.6" fill="#777"/><rect x="18.5" y="147" width="1.6" height="1.6" fill="#777"/><rect x="15.5" y="147" width="1.6" height="1.6" fill="#777"/><rect x="18.5" y="150" width="1.6" height="1.6" fill="#777"/><rect x="15.5" y="150" width="1.6" height="1.6" fill="#777"/><rect x="12.5" y="150" width="1.6" height="1.6" fill="#777"/><rect x="18.5" y="153" width="1.6" height="1.6" fill="#777"/><rect x="15.5" y="153" width="1.6" height="1.6" fill="#777"/><rect x="12.5" y="153" width="1.6" height="1.6" fill="#777"/><rect x="9.5" y="153" width="1.6" height="1.6" fill="#777"/><text x="15.5" y="176" font-size="14.5" text-anchor="middle" fill="#4a4a4a">in</text><path d="M6,183.5 h19" stroke="#4a4a4a" stroke-width="1.6"/><path d="M4.5,183.5 l4,-3 v6 z M26.5,183.5 l-4,-3 v6 z" fill="#4a4a4a"/><rect x="1.5" y="192" width="28" height="29" fill="#f9cfc2" stroke="#f06a2e" stroke-width="1"/><text x="15.5" y="207" font-size="14" text-anchor="middle" fill="#4a4a4a" textLength="19" lengthAdjust="spacingAndGlyphs">mil</text><path d="M6,213.5 h19" stroke="#4a4a4a" stroke-width="1.6"/><path d="M4.5,213.5 l4,-3 v6 z M26.5,213.5 l-4,-3 v6 z" fill="#4a4a4a"/><text x="15.5" y="239.5" font-size="14" text-anchor="middle" fill="#4a4a4a" textLength="22" lengthAdjust="spacingAndGlyphs">mm</text><path d="M6,244.5 h19" stroke="#4a4a4a" stroke-width="1.6"/><path d="M4.5,244.5 l4,-3 v6 z M26.5,244.5 l-4,-3 v6 z" fill="#4a4a4a"/><path d="M15,262 v18 M6,271 h18" stroke="#999" stroke-width="1"/><circle cx="15" cy="271" r="3" fill="#1a81c4"/><path d="M16,271 l8,7 l-3,1 l2,4 l-2,1 l-2,-4 l-3,2 z" fill="#444"/><line x1="4" y1="291" x2="27" y2="291" stroke="#ccc"/><path d="M7,302 v18 l17,-9 z" fill="none" stroke="#545454" stroke-width="1.8"/><path d="M15,300 v22" stroke="#c8102e" stroke-width="1.5"/><line x1="4" y1="332" x2="27" y2="332" stroke="#ccc"/><path d="M5,362 h21 M6,362 v-20 M6,362 l7,-14 l5,7 l6,-6" stroke="#545454" stroke-width="1.6" fill="none"/><rect x="1.5" y="370" width="28" height="30" fill="#f9cfc2" stroke="#f06a2e" stroke-width="1"/><path d="M5,395 h21 M8,373 v24 M8,385 h8 v10" stroke="#545454" stroke-width="1.6" fill="none"/><path d="M5,427 h21 M8,405 v24 M8,427 l16,-16" stroke="#545454" stroke-width="1.6" fill="none"/><line x1="4" y1="437" x2="27" y2="437" stroke="#ccc"/><rect x="1.5" y="441" width="28" height="30" fill="#f9cfc2" stroke="#f06a2e" stroke-width="1"/><rect x="4" y="444" width="23" height="10" fill="#444"/><text x="15.5" y="453" font-size="9.5" text-anchor="middle" fill="#fff">R??</text><rect x="4" y="457" width="23" height="11" fill="#1a81c4"/><text x="15.5" y="466.5" font-size="10" text-anchor="middle" fill="#fff">R42</text><line x1="4" y1="479" x2="27" y2="479" stroke="#ccc"/><rect x="5" y="488" width="21" height="21" fill="none" stroke="#545454" stroke-width="1.6"/><path d="M5,492 h21 M10,492 v14 h4 M10,499 h4" stroke="#545454" stroke-width="1.3" fill="none"/><rect x="14" y="495" width="9" height="5" fill="none" stroke="#1a81c4" stroke-width="1.2"/><rect x="14" y="502" width="9" height="5" fill="none" stroke="#1a81c4" stroke-width="1.2"/><path d="M6,541 l12,-12 M22,523 a5,5 0 1 0 3,3 l-3,1 l-1,-3 z" stroke="#1a81c4" stroke-width="2.6" fill="none"/><path d="M7,522 l16,17" stroke="#333" stroke-width="2.6"/>
<rect x="2461" y="97" width="29" height="29" fill="#f9cfc2" stroke="#f06a2e" stroke-width="1"/><path d="M2470,103 l12,10 l-5,1 l3,6 l-3,1 l-3,-6 l-4,3 z" fill="#545454"/><path d="M2463.6,135.3 h9.4 v13.3" stroke="#545454" stroke-width="1.8" fill="none"/><path d="M2463,152.3 h13 v-14 h10.6" stroke="#c8102e" stroke-width="1.8" fill="none"/><path d="M2481.5,131.9 v22.9 M2473,146.3 h13.6" stroke="#545454" stroke-width="1.8"/><line x1="2464" y1="163" x2="2487" y2="163" stroke="#ccc"/><path d="M2463.5,172.5 v23 l19.5,-11.5 z" fill="none" stroke="#545454" stroke-width="1.8"/><path d="M2460,177 h3.5 M2460,190 h3.5 M2483,184 h4 M2469,180 h4 M2469,186.5 h4 M2471,184.5 v4" stroke="#545454" stroke-width="1.3"/><path d="M2475,205 v12 M2465,217 h20 M2468,222 h14 M2471,226.5 h8" stroke="#545454" stroke-width="1.8"/><path d="M2465,258 l19.5,-19.5" stroke="#1a81c4" stroke-width="1.8" stroke-linecap="round"/><path d="M2465.5,286.5 l19,-19" stroke="#1a81c4" stroke-width="3.6" stroke-linecap="round"/><path d="M2464,302.5 h10 M2464,310 h10" stroke="#545454" stroke-width="1.8"/><path d="M2474,302.5 l10,10.5 M2474,310 l10,10" stroke="#1a81c4" stroke-width="1.8"/><path d="M2484.3,300 v23" stroke="#545454" stroke-width="2"/><path d="M2463,344 h9" stroke="#545454" stroke-width="1.8"/><path d="M2469.5,338 l12,12 M2469.5,350 l12,-12" stroke="#1a81c4" stroke-width="1.9"/><path d="M2463,376 h12 M2475,364 v24" stroke="#545454" stroke-width="1.8"/><circle cx="2475" cy="376" r="4.3" fill="#1a81c4"/><path d="M2470.8,412 l4.5,-11.5 l4.5,11.5 M2472.5,408 h5.6" stroke="#545454" stroke-width="1.5" fill="none"/><path d="M2464,414 h22" stroke="#545454" stroke-width="1.8"/><circle cx="2468.3" cy="436.7" r="2.8" fill="none" stroke="#545454" stroke-width="1.6"/><path d="M2468.3,439.5 v6" stroke="#545454" stroke-width="1.8"/><path d="M2475,443.3 l6,-10.7 l1.8,10.7 M2477.2,439.5 h5" stroke="#545454" stroke-width="1.4" fill="none"/><defs><clipPath id="ra"><path d="M2465,481 v-8 h6.6 v-10.4 h13.1 v18.4 z"/></clipPath></defs><path d="M2465,481 v-8 h6.6 v-10.4 h13.1 v18.4 z" fill="none" stroke="#545454" stroke-width="1.6"/><g clip-path="url(#ra)" stroke="#545454" stroke-width="1.4"><path d="M2460,478 l8,8 M2464,470 l14,14 M2468,462 l20,20 M2474,460 l14,14 M2480,458 l8,8"/></g><path d="M2463.5,495 h13.5 l7,9 l-7,9 h-13.5 z" fill="none" stroke="#545454" stroke-width="1.8"/><path d="M2467.5,509 l3.6,-10 l3.6,10 M2468.8,505.5 h4.6" stroke="#545454" stroke-width="1.3" fill="none"/><path d="M2484,504 h3" stroke="#1a81c4" stroke-width="1.6"/><path d="M2464.5,541.8 l4.75,-14.8 l4.75,14.8 M2466.3,536.5 h6" stroke="#545454" stroke-width="1.6" fill="none"/><path d="M2479,531 l4.3,4.3 l-4.3,4.3 l-4.3,-4.3 z" fill="none" stroke="#545454" stroke-width="1.6"/><path d="M2483.3,535.3 h3.7" stroke="#545454" stroke-width="1.6"/><rect x="2463.5" y="556.5" width="20.5" height="21" rx="3" fill="#cdbfa5" stroke="#545454" stroke-width="1.4"/><path d="M2467,561 v12 M2467,567 l5,-4 h10 M2467,569 l6,4" stroke="#545454" stroke-width="1.3" fill="none"/><circle cx="2480" cy="573" r="6.6" fill="#c8102e" stroke="#fff" stroke-width="1"/><path d="M2476.5,573 h7 M2480,569.5 v7" stroke="#fff" stroke-width="1.9"/><path d="M2463.5,591.5 h15 l6.5,8 l-6.5,8 h-15 z" fill="none" stroke="#1a81c4" stroke-width="1.8"/><path d="M2467,605 l4.2,-11.5 l4.2,11.5 M2468.5,601 h5.4" stroke="#545454" stroke-width="1.4" fill="none"/><path d="M2485,599.5 h2.5" stroke="#1a81c4" stroke-width="1.6"/><rect x="2463.5" y="620.5" width="19" height="18" fill="#cdbfa5" stroke="#545454" stroke-width="0.9"/><path d="M2465,631 l3.3,-8.5 l3.3,8.5 M2466.2,628.2 h4.2" stroke="#545454" stroke-width="1.3" fill="none"/><path d="M2477,622.5 l3,3 l-3,3 l-3,-3 z" fill="none" stroke="#545454" stroke-width="1.2"/><circle cx="2480.5" cy="635.5" r="6.6" fill="#c8102e" stroke="#fff" stroke-width="1"/><path d="M2480.5,631.5 v7 M2477.5,635.7 l3,3 l3,-3" stroke="#fff" stroke-width="1.8" fill="none"/><line x1="2464" y1="652" x2="2486" y2="652" stroke="#ccc"/><path d="M2467,664.5 h16 M2475,664.5 v19" stroke="#545454" stroke-width="3.2"/><rect x="2465.5" y="696" width="19.5" height="17.5" fill="#c4c4c4" stroke="#545454" stroke-width="1.8"/><path d="M2469,701 h12 M2469,705 h12 M2469,709 h8" stroke="#545454" stroke-width="1.3"/><rect x="2463.5" y="727" width="23.5" height="21.5" fill="#f2f2f2" stroke="#545454" stroke-width="1.1"/><rect x="2463.5" y="727" width="23.5" height="5" fill="#bdbdbd"/><path d="M2463.5,732 h23.5 M2463.5,737.5 h23.5 M2463.5,743 h23.5 M2471.3,727 v21.5 M2479.2,727 v21.5" stroke="#545454" stroke-width="1.1"/><rect x="2466" y="760" width="19" height="17" fill="#c8c8c8" stroke="#545454" stroke-width="1.8"/><circle cx="2475" cy="801" r="9.5" fill="#c8c8c8" stroke="#545454" stroke-width="1.8"/><path d="M2466,843 a14,14 0 0 1 16,-20" fill="none" stroke="#545454" stroke-width="1.8"/><path d="M2464,863 h22" stroke="#1a81c4" stroke-width="1.8"/><circle cx="2475" cy="863" r="2.5" fill="#fff" stroke="#1a81c4" stroke-width="1.2"/><path d="M2470,874 q-3,-9 5,-11 q8,-2 5,-11" fill="none" stroke="#545454" stroke-width="1.6"/><path d="M2465,907 l20,-20" stroke="#545454" stroke-width="1.8"/><rect x="2465" y="919" width="21" height="19" rx="2" fill="#545454"/><path d="M2467,935 l6,-7 l4,4 l3,-3 l5,6 z" fill="#fff"/><circle cx="2479" cy="924" r="2" fill="#fff"/><path d="M2465,950 l11,9 l-4,1 l3,5 l-2,1 l-3,-5 l-4,3 z" fill="#545454"/><circle cx="2483" cy="965" r="6.5" fill="#c8102e"/><path d="M2480,962 l6,6 M2486,962 l-6,6" stroke="#fff" stroke-width="1.6"/>
<rect x="0" y="1343" width="2492" height="35" fill="#fefefe"/>
<rect x="2491" y="1343" width="1" height="35" fill="#e0e0e0"/>
<rect x="0" y="1378" width="2492" height="24" fill="#f8f8f8"/>
<g font-size="14.5" fill="#333">
<text x="3.0" y="1395.8" textLength="549.1" lengthAdjust="spacingAndGlyphs" xml:space="preserve">File '/home/kai/projects/pcbs/3D-Printer-Driver-Board/PCB/board.kicad_sch' saved.</text><text x="1260.5" y="1395.8" textLength="39.5" lengthAdjust="spacingAndGlyphs" xml:space="preserve">Z 3.23</text><text x="1345.5" y="1395.8" textLength="93.5" lengthAdjust="spacingAndGlyphs" xml:space="preserve">X 6300  Y 5400</text><text x="1536.5" y="1395.8" textLength="174.5999999999999" lengthAdjust="spacingAndGlyphs" xml:space="preserve">dx 6300  dy 5400  dist 8298</text><text x="1844.9" y="1395.8" textLength="46.59999999999991" lengthAdjust="spacingAndGlyphs" xml:space="preserve">grid 50</text><text x="2065.2" y="1395.8" textLength="28.5" lengthAdjust="spacingAndGlyphs" xml:space="preserve">mils</text><text x="2132.5" y="1395.8" textLength="90.80000000000018" lengthAdjust="spacingAndGlyphs" xml:space="preserve">Select item(s)</text>
</g>
</svg>
</body></html>
